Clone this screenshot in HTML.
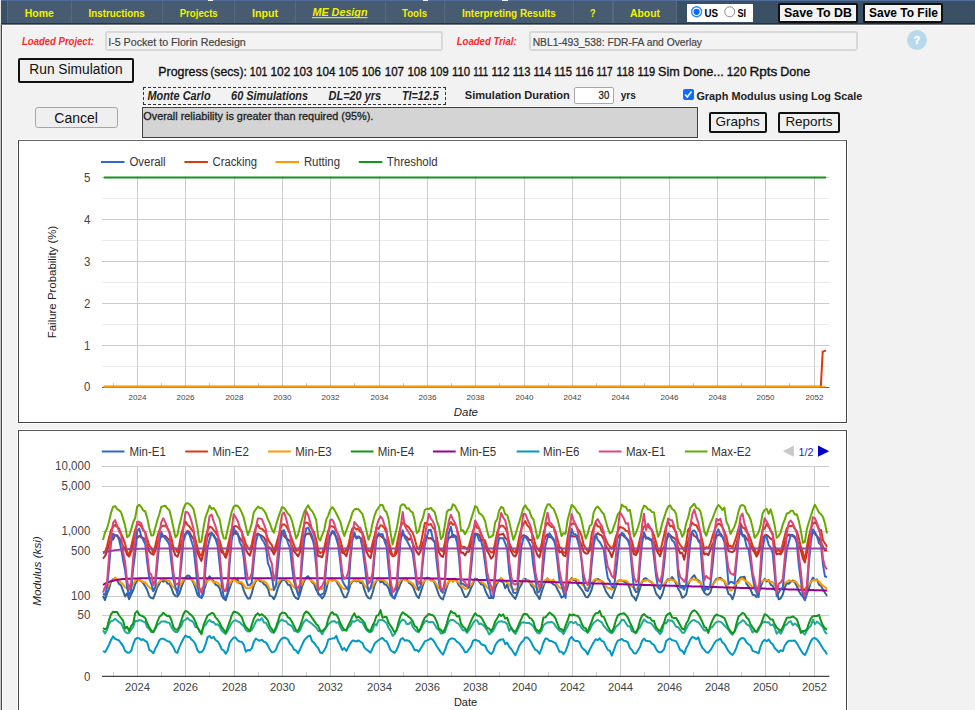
<!DOCTYPE html>
<html><head><meta charset="utf-8"><title>ME Design</title>
<style>
html,body{margin:0;padding:0;}
body{width:975px;height:710px;overflow:hidden;position:relative;background:#f2f2f2;font-family:"Liberation Sans",sans-serif;}
.a{position:absolute;box-sizing:border-box;}
#nav{left:0;top:0;width:975px;height:24px;background:#3a5064;}
.ni{top:1px;height:22px;background:#475c70;border-left:1px solid #55687d;border-right:1px solid #55687d;}
.btn{background:#f0f0f0;border:2px solid #111;border-radius:2px;}
svg{position:absolute;left:0;top:0;}
svg text{font-family:"Liberation Sans",sans-serif;}
</style></head><body>
<div class="a" style="left:0;top:0;width:1px;height:710px;background:#c8c8c8"></div>
<div class="a" style="left:1px;top:0;width:1px;height:710px;background:#444"></div>
<div class="a" style="left:2px;top:25px;width:1px;height:685px;background:#fff"></div>
<div class="a" id="nav"></div>
<div class="a" style="left:1px;top:0;width:974px;height:1px;background:#506c9b"></div>
<div class="a" style="left:208px;top:0;width:5px;height:1px;background:#f4f4f4"></div>
<div class="a" style="left:423px;top:0;width:5px;height:1px;background:#f4f4f4"></div>
<div class="a" style="left:502px;top:0;width:6px;height:1px;background:#f4f4f4"></div>
<div class="a" style="left:0;top:0;width:1px;height:24px;background:#e8e8e8"></div>
<div class="a ni" style="left:7px;width:64.5px"></div>
<div class="a ni" style="left:71px;width:91.5px"></div>
<div class="a ni" style="left:162px;width:72.5px"></div>
<div class="a ni" style="left:234px;width:61.5px"></div>
<div class="a ni" style="left:295px;width:90.5px"></div>
<div class="a ni" style="left:385px;width:59.5px"></div>
<div class="a ni" style="left:444px;width:129.5px"></div>
<div class="a ni" style="left:573px;width:40px"></div>
<div class="a ni" style="left:612.5px;width:64.5px"></div>
<div class="a" style="left:1px;top:23px;width:974px;height:1px;background:#27323e"></div>
<div class="a" style="left:1px;top:24px;width:974px;height:1px;background:#6f757c"></div>
<div class="a" style="left:2px;top:25px;width:973px;height:1px;background:#fff"></div>
<div class="a" style="left:687px;top:4px;width:66px;height:17.5px;background:#fff"></div>
<div class="a btn" style="left:778px;top:3px;width:80px;height:20px;background:#f2f2f2"></div>
<div class="a btn" style="left:863px;top:3px;width:80px;height:20px;background:#f2f2f2"></div>

<div class="a" style="left:105px;top:31px;width:337.5px;height:19.5px;border:2px solid #d8d8d8;border-radius:3px;background:#f3f3f3"></div>
<div class="a" style="left:529px;top:31px;width:329px;height:19.5px;border:2px solid #d8d8d8;border-radius:3px;background:#f3f3f3"></div>
<div class="a" style="left:907px;top:30px;width:20px;height:20px;border-radius:50%;background:#b8d9ec"></div>

<div class="a btn" style="left:18px;top:58px;width:116px;height:24.5px"></div>
<div class="a" style="left:142.5px;top:87px;width:303.5px;height:17.5px;border:1px dashed #333"></div>
<div class="a" style="left:141px;top:106px;width:558px;height:33px;border:1px solid #fafafa"></div>
<div class="a" style="left:142px;top:107px;width:556px;height:31px;background:#d4d4d4;border:1.2px solid #404040"></div>
<div class="a" style="left:574px;top:87px;width:39.5px;height:16.5px;background:#fff;border:1px solid #a8a8a8;border-radius:2px"></div>
<div class="a" style="left:683px;top:89px;width:10.5px;height:11px;background:#0b6cff;border-radius:2px"></div>
<div class="a" style="left:35px;top:107px;width:83px;height:21px;background:#efefef;border:1.5px solid #a6a6a6;border-radius:3px"></div>
<div class="a btn" style="left:708.5px;top:111.5px;width:58px;height:21.5px"></div>
<div class="a btn" style="left:778px;top:111.5px;width:61.5px;height:21.5px"></div>

<div class="a" style="left:17px;top:139px;width:831px;height:285px;background:#fff"></div>
<div class="a" style="left:18px;top:140px;width:829px;height:283px;background:#fff;border:1px solid #444;border-top-color:#666"></div>
<div class="a" style="left:17px;top:429px;width:831px;height:290px;background:#fff"></div>
<div class="a" style="left:18px;top:430px;width:829px;height:290px;background:#fff;border:1px solid #444;border-top-color:#555"></div>

<svg width="975" height="710" viewBox="0 0 975 710">
<circle cx="696.6" cy="11.8" r="5" fill="#fff" stroke="#2f86ff" stroke-width="1.4"/>
<circle cx="696.6" cy="11.8" r="3.1" fill="#0b6bff"/>
<circle cx="729.7" cy="11.8" r="5" fill="#fff" stroke="#888" stroke-width="1"/>
<polyline points="685,94.5 687.3,97 691.5,91.5" fill="none" stroke="#fff" stroke-width="1.6"/>
<line x1="102.0" y1="366.5" x2="829.3" y2="366.5" stroke="#ebebeb" stroke-width="1"/><line x1="102.0" y1="324.5" x2="829.3" y2="324.5" stroke="#ebebeb" stroke-width="1"/><line x1="102.0" y1="282.5" x2="829.3" y2="282.5" stroke="#ebebeb" stroke-width="1"/><line x1="102.0" y1="240.5" x2="829.3" y2="240.5" stroke="#ebebeb" stroke-width="1"/><line x1="102.0" y1="198.5" x2="829.3" y2="198.5" stroke="#ebebeb" stroke-width="1"/><line x1="102.0" y1="345.5" x2="829.3" y2="345.5" stroke="#cccccc" stroke-width="1"/><line x1="102.0" y1="303.5" x2="829.3" y2="303.5" stroke="#cccccc" stroke-width="1"/><line x1="102.0" y1="261.5" x2="829.3" y2="261.5" stroke="#cccccc" stroke-width="1"/><line x1="102.0" y1="219.5" x2="829.3" y2="219.5" stroke="#cccccc" stroke-width="1"/><line x1="102.0" y1="177.5" x2="829.3" y2="177.5" stroke="#cccccc" stroke-width="1"/><line x1="137.5" y1="176" x2="137.5" y2="387" stroke="#cccccc" stroke-width="1"/><line x1="185.5" y1="176" x2="185.5" y2="387" stroke="#cccccc" stroke-width="1"/><line x1="234.5" y1="176" x2="234.5" y2="387" stroke="#cccccc" stroke-width="1"/><line x1="282.5" y1="176" x2="282.5" y2="387" stroke="#cccccc" stroke-width="1"/><line x1="330.5" y1="176" x2="330.5" y2="387" stroke="#cccccc" stroke-width="1"/><line x1="379.5" y1="176" x2="379.5" y2="387" stroke="#cccccc" stroke-width="1"/><line x1="427.5" y1="176" x2="427.5" y2="387" stroke="#cccccc" stroke-width="1"/><line x1="475.5" y1="176" x2="475.5" y2="387" stroke="#cccccc" stroke-width="1"/><line x1="524.5" y1="176" x2="524.5" y2="387" stroke="#cccccc" stroke-width="1"/><line x1="572.5" y1="176" x2="572.5" y2="387" stroke="#cccccc" stroke-width="1"/><line x1="620.5" y1="176" x2="620.5" y2="387" stroke="#cccccc" stroke-width="1"/><line x1="669.5" y1="176" x2="669.5" y2="387" stroke="#cccccc" stroke-width="1"/><line x1="717.5" y1="176" x2="717.5" y2="387" stroke="#cccccc" stroke-width="1"/><line x1="765.5" y1="176" x2="765.5" y2="387" stroke="#cccccc" stroke-width="1"/><line x1="814.5" y1="176" x2="814.5" y2="387" stroke="#cccccc" stroke-width="1"/><line x1="113.5" y1="383" x2="113.5" y2="387" stroke="#cccccc" stroke-width="1"/><line x1="161.5" y1="383" x2="161.5" y2="387" stroke="#cccccc" stroke-width="1"/><line x1="209.5" y1="383" x2="209.5" y2="387" stroke="#cccccc" stroke-width="1"/><line x1="258.5" y1="383" x2="258.5" y2="387" stroke="#cccccc" stroke-width="1"/><line x1="306.5" y1="383" x2="306.5" y2="387" stroke="#cccccc" stroke-width="1"/><line x1="354.5" y1="383" x2="354.5" y2="387" stroke="#cccccc" stroke-width="1"/><line x1="403.5" y1="383" x2="403.5" y2="387" stroke="#cccccc" stroke-width="1"/><line x1="451.5" y1="383" x2="451.5" y2="387" stroke="#cccccc" stroke-width="1"/><line x1="499.5" y1="383" x2="499.5" y2="387" stroke="#cccccc" stroke-width="1"/><line x1="548.5" y1="383" x2="548.5" y2="387" stroke="#cccccc" stroke-width="1"/><line x1="596.5" y1="383" x2="596.5" y2="387" stroke="#cccccc" stroke-width="1"/><line x1="644.5" y1="383" x2="644.5" y2="387" stroke="#cccccc" stroke-width="1"/><line x1="693.5" y1="383" x2="693.5" y2="387" stroke="#cccccc" stroke-width="1"/><line x1="741.5" y1="383" x2="741.5" y2="387" stroke="#cccccc" stroke-width="1"/><line x1="789.5" y1="383" x2="789.5" y2="387" stroke="#cccccc" stroke-width="1"/><line x1="102.0" y1="387.5" x2="829.3" y2="387.5" stroke="#555" stroke-width="1"/><line x1="103.8" y1="177.5" x2="826" y2="177.5" stroke="#109618" stroke-width="2"/><polyline points="103.8,386.7 820.8,386.7 822.7,351.8 826,350.4" fill="none" stroke="#dc3912" stroke-width="2"/><line x1="103.8" y1="386.7" x2="820" y2="386.7" stroke="#ff9900" stroke-width="2"/><line x1="820" y1="386.7" x2="826" y2="386.7" stroke="#ff9900" stroke-width="2" opacity="0.7"/><line x1="101" y1="162" x2="124.5" y2="162" stroke="#3366cc" stroke-width="2"/><line x1="184.4" y1="162" x2="207.9" y2="162" stroke="#dc3912" stroke-width="2"/><line x1="275.5" y1="162" x2="299.0" y2="162" stroke="#ff9900" stroke-width="2"/><line x1="358.8" y1="162" x2="382.3" y2="162" stroke="#109618" stroke-width="2"/><line x1="102.0" y1="466.5" x2="829.3" y2="466.5" stroke="#cccccc" stroke-width="1"/><line x1="102.0" y1="486.5" x2="829.3" y2="486.5" stroke="#cccccc" stroke-width="1"/><line x1="102.0" y1="531.5" x2="829.3" y2="531.5" stroke="#cccccc" stroke-width="1"/><line x1="102.0" y1="551.5" x2="829.3" y2="551.5" stroke="#cccccc" stroke-width="1"/><line x1="102.0" y1="596.5" x2="829.3" y2="596.5" stroke="#cccccc" stroke-width="1"/><line x1="102.0" y1="615.5" x2="829.3" y2="615.5" stroke="#cccccc" stroke-width="1"/><line x1="137.5" y1="466" x2="137.5" y2="676" stroke="#cccccc" stroke-width="1"/><line x1="185.5" y1="466" x2="185.5" y2="676" stroke="#cccccc" stroke-width="1"/><line x1="234.5" y1="466" x2="234.5" y2="676" stroke="#cccccc" stroke-width="1"/><line x1="282.5" y1="466" x2="282.5" y2="676" stroke="#cccccc" stroke-width="1"/><line x1="330.5" y1="466" x2="330.5" y2="676" stroke="#cccccc" stroke-width="1"/><line x1="379.5" y1="466" x2="379.5" y2="676" stroke="#cccccc" stroke-width="1"/><line x1="427.5" y1="466" x2="427.5" y2="676" stroke="#cccccc" stroke-width="1"/><line x1="475.5" y1="466" x2="475.5" y2="676" stroke="#cccccc" stroke-width="1"/><line x1="524.5" y1="466" x2="524.5" y2="676" stroke="#cccccc" stroke-width="1"/><line x1="572.5" y1="466" x2="572.5" y2="676" stroke="#cccccc" stroke-width="1"/><line x1="620.5" y1="466" x2="620.5" y2="676" stroke="#cccccc" stroke-width="1"/><line x1="669.5" y1="466" x2="669.5" y2="676" stroke="#cccccc" stroke-width="1"/><line x1="717.5" y1="466" x2="717.5" y2="676" stroke="#cccccc" stroke-width="1"/><line x1="765.5" y1="466" x2="765.5" y2="676" stroke="#cccccc" stroke-width="1"/><line x1="814.5" y1="466" x2="814.5" y2="676" stroke="#cccccc" stroke-width="1"/><line x1="113.5" y1="672" x2="113.5" y2="676" stroke="#cccccc" stroke-width="1"/><line x1="161.5" y1="672" x2="161.5" y2="676" stroke="#cccccc" stroke-width="1"/><line x1="209.5" y1="672" x2="209.5" y2="676" stroke="#cccccc" stroke-width="1"/><line x1="258.5" y1="672" x2="258.5" y2="676" stroke="#cccccc" stroke-width="1"/><line x1="306.5" y1="672" x2="306.5" y2="676" stroke="#cccccc" stroke-width="1"/><line x1="354.5" y1="672" x2="354.5" y2="676" stroke="#cccccc" stroke-width="1"/><line x1="403.5" y1="672" x2="403.5" y2="676" stroke="#cccccc" stroke-width="1"/><line x1="451.5" y1="672" x2="451.5" y2="676" stroke="#cccccc" stroke-width="1"/><line x1="499.5" y1="672" x2="499.5" y2="676" stroke="#cccccc" stroke-width="1"/><line x1="548.5" y1="672" x2="548.5" y2="676" stroke="#cccccc" stroke-width="1"/><line x1="596.5" y1="672" x2="596.5" y2="676" stroke="#cccccc" stroke-width="1"/><line x1="644.5" y1="672" x2="644.5" y2="676" stroke="#cccccc" stroke-width="1"/><line x1="693.5" y1="672" x2="693.5" y2="676" stroke="#cccccc" stroke-width="1"/><line x1="741.5" y1="672" x2="741.5" y2="676" stroke="#cccccc" stroke-width="1"/><line x1="789.5" y1="672" x2="789.5" y2="676" stroke="#cccccc" stroke-width="1"/><line x1="102.0" y1="676.3" x2="829.3" y2="676.3" stroke="#444" stroke-width="1.3"/><line x1="101.8" y1="451.5" x2="124.5" y2="451.5" stroke="#3366cc" stroke-width="2"/><line x1="185.20000000000002" y1="451.5" x2="207.9" y2="451.5" stroke="#dc3912" stroke-width="2"/><line x1="268.1" y1="451.5" x2="290.8" y2="451.5" stroke="#ff9900" stroke-width="2"/><line x1="350.8" y1="451.5" x2="373.5" y2="451.5" stroke="#109618" stroke-width="2"/><line x1="433.0" y1="451.5" x2="455.7" y2="451.5" stroke="#990099" stroke-width="2"/><line x1="516.6999999999999" y1="451.5" x2="539.4" y2="451.5" stroke="#0099c6" stroke-width="2"/><line x1="598.8" y1="451.5" x2="621.5" y2="451.5" stroke="#dd4477" stroke-width="2"/><line x1="684.8" y1="451.5" x2="707.5" y2="451.5" stroke="#66aa00" stroke-width="2"/><polygon points="782.8,451.2 793.8,445.5 793.8,456.8" fill="#c8c8c8"/><polygon points="829.2,451.2 818,445.5 818,456.8" fill="#0000cc"/>
<g clip-path="url(#cp)"><path d="M103.0,651.0 L105.0,652.2 L107.0,648.7 L109.0,644.7 L111.0,640.0 L113.1,636.4 L115.1,638.8 L117.1,639.6 L119.1,640.5 L121.1,643.3 L123.1,646.1 L125.1,650.9 L127.1,652.4 L129.1,652.8 L131.2,650.9 L133.2,644.2 L135.2,639.4 L137.2,637.9 L139.2,638.4 L141.2,640.0 L143.2,639.2 L145.2,640.9 L147.2,642.2 L149.3,649.9 L151.3,651.1 L153.3,653.3 L155.3,648.6 L157.3,645.1 L159.3,640.3 L161.3,638.8 L163.3,638.7 L165.3,639.8 L167.4,641.3 L169.4,641.6 L171.4,644.0 L173.4,647.1 L175.4,651.9 L177.4,652.9 L179.4,647.1 L181.4,642.7 L183.4,638.7 L185.5,635.6 L187.5,636.8 L189.5,636.9 L191.5,639.6 L193.5,641.3 L195.5,644.4 L197.5,650.4 L199.5,652.5 L201.5,652.1 L203.6,649.6 L205.6,644.1 L207.6,637.2 L209.6,636.0 L211.6,638.2 L213.6,636.8 L215.6,640.0 L217.6,641.3 L219.6,644.5 L221.7,649.4 L223.7,650.4 L225.7,653.8 L227.7,650.5 L229.7,642.7 L231.7,639.8 L233.7,637.6 L235.7,637.5 L237.7,640.3 L239.8,641.7 L241.8,641.8 L243.8,644.8 L245.8,651.8 L247.8,649.9 L249.8,650.5 L251.8,648.4 L253.8,641.9 L255.8,638.5 L257.9,640.0 L259.9,640.7 L261.9,639.7 L263.9,641.7 L265.9,642.4 L267.9,645.6 L269.9,649.6 L271.9,652.3 L273.9,651.9 L276.0,649.6 L278.0,644.2 L280.0,640.7 L282.0,638.5 L284.0,637.6 L286.0,638.0 L288.0,639.5 L290.0,643.7 L292.0,645.6 L294.1,649.7 L296.1,650.7 L298.1,653.4 L300.1,649.3 L302.1,644.8 L304.1,640.5 L306.1,638.2 L308.1,636.3 L310.1,635.6 L312.2,641.3 L314.2,642.9 L316.2,645.8 L318.2,648.0 L320.2,652.6 L322.2,653.3 L324.2,650.2 L326.2,646.7 L328.2,639.7 L330.3,639.0 L332.3,638.4 L334.3,638.3 L336.3,635.8 L338.3,641.6 L340.3,645.0 L342.3,649.9 L344.3,648.0 L346.3,651.0 L348.4,646.9 L350.4,643.3 L352.4,640.5 L354.4,640.8 L356.4,641.6 L358.4,640.4 L360.4,641.8 L362.4,642.8 L364.4,647.6 L366.5,649.6 L368.5,650.9 L370.5,652.7 L372.5,648.3 L374.5,643.9 L376.5,641.7 L378.5,640.2 L380.5,638.7 L382.5,638.0 L384.6,640.4 L386.6,641.3 L388.6,645.5 L390.6,650.2 L392.6,651.7 L394.6,652.9 L396.6,650.0 L398.6,645.2 L400.6,639.4 L402.7,638.0 L404.7,640.6 L406.7,640.2 L408.7,640.7 L410.7,642.7 L412.7,646.0 L414.7,650.3 L416.7,650.0 L418.7,651.6 L420.8,648.2 L422.8,644.9 L424.8,641.4 L426.8,640.6 L428.8,639.6 L430.8,638.3 L432.8,639.9 L434.8,642.6 L436.8,646.2 L438.9,649.4 L440.9,652.4 L442.9,654.7 L444.9,650.4 L446.9,644.4 L448.9,640.0 L450.9,638.6 L452.9,638.4 L454.9,639.4 L457.0,641.8 L459.0,643.0 L461.0,645.6 L463.0,648.3 L465.0,652.2 L467.0,652.0 L469.0,649.1 L471.0,646.5 L473.0,640.8 L475.1,639.7 L477.1,640.5 L479.1,641.1 L481.1,644.0 L483.1,645.1 L485.1,645.5 L487.1,650.2 L489.1,652.4 L491.1,654.1 L493.2,651.6 L495.2,645.3 L497.2,642.2 L499.2,640.3 L501.2,639.5 L503.2,639.2 L505.2,644.1 L507.2,642.6 L509.2,646.8 L511.3,649.0 L513.3,652.2 L515.3,655.3 L517.3,650.8 L519.3,645.7 L521.3,642.5 L523.3,640.6 L525.3,637.4 L527.3,637.6 L529.4,639.5 L531.4,642.8 L533.4,646.7 L535.4,649.9 L537.4,650.7 L539.4,653.8 L541.4,649.1 L543.4,642.8 L545.4,638.6 L547.5,638.8 L549.5,641.0 L551.5,641.0 L553.5,642.2 L555.5,643.0 L557.5,647.1 L559.5,651.8 L561.5,651.7 L563.5,654.2 L565.6,651.2 L567.6,645.9 L569.6,639.1 L571.6,636.9 L573.6,639.7 L575.6,641.1 L577.6,641.0 L579.6,642.4 L581.6,647.1 L583.7,649.4 L585.7,650.9 L587.7,654.4 L589.7,649.7 L591.7,645.9 L593.7,642.2 L595.7,639.2 L597.7,640.2 L599.7,638.3 L601.8,641.0 L603.8,641.6 L605.8,646.1 L607.8,649.9 L609.8,650.7 L611.8,655.6 L613.8,650.3 L615.8,644.6 L617.8,640.7 L619.9,639.8 L621.9,639.0 L623.9,640.8 L625.9,641.1 L627.9,642.3 L629.9,647.8 L631.9,650.0 L633.9,653.2 L635.9,653.5 L638.0,650.2 L640.0,646.9 L642.0,641.2 L644.0,638.5 L646.0,640.8 L648.0,641.1 L650.0,641.3 L652.0,643.8 L654.0,644.8 L656.1,649.0 L658.1,651.8 L660.1,652.4 L662.1,651.5 L664.1,649.2 L666.1,641.1 L668.1,639.4 L670.1,638.4 L672.1,640.3 L674.2,640.6 L676.2,641.4 L678.2,645.3 L680.2,650.2 L682.2,650.8 L684.2,653.9 L686.2,647.9 L688.2,644.5 L690.2,639.6 L692.3,637.0 L694.3,637.6 L696.3,639.2 L698.3,637.2 L700.3,643.6 L702.3,647.7 L704.3,649.9 L706.3,652.3 L708.3,652.7 L710.4,650.2 L712.4,646.9 L714.4,643.1 L716.4,640.5 L718.4,639.9 L720.4,638.6 L722.4,642.4 L724.4,644.0 L726.4,647.5 L728.5,651.2 L730.5,653.5 L732.5,655.0 L734.5,652.0 L736.5,647.4 L738.5,641.3 L740.5,638.7 L742.5,638.0 L744.5,638.9 L746.6,642.4 L748.6,644.3 L750.6,645.8 L752.6,650.8 L754.6,651.6 L756.6,652.3 L758.6,653.3 L760.6,646.3 L762.6,641.7 L764.7,639.7 L766.7,641.2 L768.7,639.5 L770.7,642.4 L772.7,644.2 L774.7,648.0 L776.7,650.1 L778.7,652.2 L780.7,650.3 L782.8,651.2 L784.8,645.5 L786.8,642.5 L788.8,640.7 L790.8,640.8 L792.8,640.8 L794.8,640.6 L796.8,643.1 L798.8,646.7 L800.9,650.3 L802.9,653.6 L804.9,654.9 L806.9,651.2 L808.9,645.9 L810.9,641.2 L812.9,638.4 L814.9,638.1 L816.9,639.4 L819.0,642.0 L821.0,645.3 L823.0,648.6 L825.0,651.1 L827.0,654.5" fill="none" stroke="#0099c6" stroke-width="2" stroke-linejoin="round"/><path d="M103.0,630.2 L105.0,633.5 L107.0,630.1 L109.0,624.0 L111.0,621.2 L113.1,620.6 L115.1,618.8 L117.1,620.6 L119.1,622.3 L121.1,623.3 L123.1,627.7 L125.1,631.7 L127.1,633.3 L129.1,633.1 L131.2,629.6 L133.2,627.0 L135.2,620.8 L137.2,621.3 L139.2,620.0 L141.2,620.5 L143.2,621.6 L145.2,622.3 L147.2,627.2 L149.3,629.0 L151.3,632.1 L153.3,632.3 L155.3,628.9 L157.3,625.1 L159.3,623.4 L161.3,621.6 L163.3,621.5 L165.3,621.3 L167.4,622.6 L169.4,622.7 L171.4,627.2 L173.4,630.2 L175.4,631.9 L177.4,632.1 L179.4,628.5 L181.4,625.9 L183.4,620.6 L185.5,619.9 L187.5,617.8 L189.5,620.2 L191.5,620.7 L193.5,622.6 L195.5,627.1 L197.5,626.9 L199.5,631.9 L201.5,632.6 L203.6,626.6 L205.6,624.8 L207.6,621.7 L209.6,620.0 L211.6,622.0 L213.6,622.1 L215.6,624.7 L217.6,624.2 L219.6,626.3 L221.7,630.5 L223.7,632.4 L225.7,634.0 L227.7,630.7 L229.7,626.9 L231.7,622.9 L233.7,620.9 L235.7,620.3 L237.7,621.5 L239.8,622.2 L241.8,624.5 L243.8,626.1 L245.8,629.8 L247.8,631.6 L249.8,631.2 L251.8,629.6 L253.8,626.4 L255.8,621.7 L257.9,619.5 L259.9,620.4 L261.9,618.1 L263.9,622.5 L265.9,622.8 L267.9,626.6 L269.9,630.3 L271.9,632.2 L273.9,632.8 L276.0,629.3 L278.0,624.1 L280.0,620.8 L282.0,619.6 L284.0,620.9 L286.0,621.2 L288.0,624.0 L290.0,625.0 L292.0,626.1 L294.1,630.9 L296.1,631.4 L298.1,632.4 L300.1,630.4 L302.1,625.2 L304.1,621.7 L306.1,619.5 L308.1,621.0 L310.1,622.4 L312.2,624.0 L314.2,625.8 L316.2,627.5 L318.2,630.7 L320.2,631.5 L322.2,634.3 L324.2,630.4 L326.2,627.1 L328.2,624.6 L330.3,622.4 L332.3,621.4 L334.3,621.0 L336.3,622.8 L338.3,622.1 L340.3,627.0 L342.3,630.6 L344.3,630.1 L346.3,630.8 L348.4,626.8 L350.4,625.7 L352.4,621.1 L354.4,621.8 L356.4,620.2 L358.4,620.1 L360.4,622.0 L362.4,622.6 L364.4,626.4 L366.5,630.0 L368.5,631.7 L370.5,632.3 L372.5,630.4 L374.5,624.2 L376.5,625.4 L378.5,620.2 L380.5,620.0 L382.5,619.9 L384.6,621.4 L386.6,623.1 L388.6,628.0 L390.6,630.9 L392.6,635.9 L394.6,634.1 L396.6,629.8 L398.6,625.6 L400.6,621.4 L402.7,619.6 L404.7,620.6 L406.7,624.1 L408.7,624.1 L410.7,621.6 L412.7,626.8 L414.7,629.3 L416.7,631.5 L418.7,631.8 L420.8,629.1 L422.8,624.8 L424.8,621.6 L426.8,620.7 L428.8,622.2 L430.8,622.0 L432.8,621.9 L434.8,624.8 L436.8,628.2 L438.9,630.1 L440.9,633.6 L442.9,633.2 L444.9,632.2 L446.9,626.0 L448.9,621.6 L450.9,619.7 L452.9,619.9 L454.9,621.2 L457.0,623.0 L459.0,624.2 L461.0,627.6 L463.0,630.5 L465.0,630.1 L467.0,633.0 L469.0,630.2 L471.0,626.7 L473.0,623.4 L475.1,620.2 L477.1,620.3 L479.1,623.9 L481.1,623.6 L483.1,625.2 L485.1,627.4 L487.1,630.1 L489.1,634.4 L491.1,632.6 L493.2,630.9 L495.2,626.5 L497.2,623.0 L499.2,621.4 L501.2,621.3 L503.2,621.8 L505.2,622.2 L507.2,624.2 L509.2,630.9 L511.3,627.5 L513.3,631.5 L515.3,633.9 L517.3,630.4 L519.3,626.4 L521.3,622.8 L523.3,622.2 L525.3,622.8 L527.3,622.9 L529.4,623.1 L531.4,624.4 L533.4,626.6 L535.4,630.1 L537.4,632.9 L539.4,633.5 L541.4,630.8 L543.4,625.4 L545.4,623.7 L547.5,622.2 L549.5,622.5 L551.5,621.8 L553.5,623.0 L555.5,625.9 L557.5,628.8 L559.5,630.8 L561.5,631.6 L563.5,634.1 L565.6,629.9 L567.6,626.3 L569.6,622.1 L571.6,622.1 L573.6,623.3 L575.6,621.8 L577.6,624.7 L579.6,624.8 L581.6,628.1 L583.7,630.1 L585.7,631.0 L587.7,632.4 L589.7,629.8 L591.7,625.6 L593.7,622.7 L595.7,621.3 L597.7,619.8 L599.7,621.2 L601.8,622.4 L603.8,626.0 L605.8,628.2 L607.8,630.5 L609.8,632.1 L611.8,633.3 L613.8,630.8 L615.8,626.8 L617.8,625.4 L619.9,623.0 L621.9,619.8 L623.9,620.0 L625.9,623.2 L627.9,626.3 L629.9,626.3 L631.9,631.3 L633.9,631.9 L635.9,633.4 L638.0,629.7 L640.0,627.4 L642.0,623.3 L644.0,619.5 L646.0,621.3 L648.0,622.6 L650.0,622.8 L652.0,624.2 L654.0,627.0 L656.1,629.9 L658.1,631.6 L660.1,634.2 L662.1,631.5 L664.1,622.4 L666.1,623.5 L668.1,620.0 L670.1,620.8 L672.1,620.6 L674.2,623.4 L676.2,626.8 L678.2,627.2 L680.2,629.8 L682.2,632.7 L684.2,632.7 L686.2,629.1 L688.2,624.8 L690.2,622.3 L692.3,620.5 L694.3,620.0 L696.3,621.5 L698.3,622.1 L700.3,624.7 L702.3,627.7 L704.3,630.5 L706.3,630.2 L708.3,631.1 L710.4,627.7 L712.4,627.0 L714.4,624.1 L716.4,622.1 L718.4,621.4 L720.4,621.8 L722.4,623.3 L724.4,625.5 L726.4,627.5 L728.5,629.9 L730.5,632.9 L732.5,634.8 L734.5,631.3 L736.5,627.4 L738.5,623.4 L740.5,622.3 L742.5,620.1 L744.5,621.3 L746.6,624.4 L748.6,625.2 L750.6,628.0 L752.6,632.5 L754.6,630.6 L756.6,632.3 L758.6,630.0 L760.6,624.7 L762.6,622.5 L764.7,621.7 L766.7,622.4 L768.7,622.2 L770.7,625.3 L772.7,624.4 L774.7,627.6 L776.7,633.7 L778.7,631.3 L780.7,633.7 L782.8,629.7 L784.8,625.4 L786.8,624.5 L788.8,622.0 L790.8,621.3 L792.8,625.2 L794.8,623.5 L796.8,625.0 L798.8,627.3 L800.9,630.6 L802.9,632.5 L804.9,634.6 L806.9,630.5 L808.9,627.6 L810.9,625.7 L812.9,619.9 L814.9,624.0 L816.9,621.6 L819.0,623.3 L821.0,625.0 L823.0,627.5 L825.0,632.0 L827.0,634.1" fill="none" stroke="#22aa99" stroke-width="2" stroke-linejoin="round"/><path d="M103.0,628.0 L105.0,629.3 L107.0,627.9 L109.0,620.1 L111.0,614.4 L113.1,611.7 L115.1,612.0 L117.1,612.0 L119.1,615.5 L121.1,618.0 L123.1,620.7 L125.1,628.6 L127.1,626.7 L129.1,631.0 L131.2,625.8 L133.2,623.5 L135.2,613.1 L137.2,611.1 L139.2,614.8 L141.2,615.6 L143.2,616.6 L145.2,617.8 L147.2,623.3 L149.3,627.4 L151.3,630.5 L153.3,632.1 L155.3,628.0 L157.3,622.0 L159.3,617.0 L161.3,615.3 L163.3,612.7 L165.3,614.6 L167.4,616.1 L169.4,615.8 L171.4,620.2 L173.4,626.8 L175.4,629.5 L177.4,629.8 L179.4,626.4 L181.4,620.2 L183.4,614.1 L185.5,610.9 L187.5,611.6 L189.5,613.8 L191.5,615.3 L193.5,617.7 L195.5,621.9 L197.5,627.9 L199.5,630.4 L201.5,634.3 L203.6,624.8 L205.6,620.2 L207.6,615.5 L209.6,614.3 L211.6,613.0 L213.6,613.5 L215.6,617.4 L217.6,619.5 L219.6,622.6 L221.7,627.1 L223.7,629.6 L225.7,633.0 L227.7,627.0 L229.7,621.7 L231.7,615.6 L233.7,611.8 L235.7,612.1 L237.7,612.9 L239.8,614.8 L241.8,617.1 L243.8,623.2 L245.8,627.0 L247.8,628.9 L249.8,631.2 L251.8,624.9 L253.8,618.7 L255.8,615.1 L257.9,613.3 L259.9,615.5 L261.9,614.2 L263.9,615.9 L265.9,617.8 L267.9,620.5 L269.9,626.5 L271.9,629.1 L273.9,632.1 L276.0,626.8 L278.0,621.1 L280.0,614.6 L282.0,612.8 L284.0,612.7 L286.0,613.8 L288.0,617.4 L290.0,618.5 L292.0,622.0 L294.1,626.1 L296.1,630.4 L298.1,630.6 L300.1,626.1 L302.1,620.2 L304.1,613.8 L306.1,611.5 L308.1,612.5 L310.1,614.9 L312.2,618.2 L314.2,620.9 L316.2,624.0 L318.2,625.8 L320.2,630.3 L322.2,631.3 L324.2,629.3 L326.2,626.9 L328.2,619.2 L330.3,614.0 L332.3,612.1 L334.3,614.5 L336.3,614.5 L338.3,617.9 L340.3,623.0 L342.3,626.7 L344.3,629.9 L346.3,630.0 L348.4,625.2 L350.4,621.1 L352.4,616.5 L354.4,613.3 L356.4,617.8 L358.4,616.5 L360.4,618.3 L362.4,620.2 L364.4,622.6 L366.5,628.2 L368.5,630.3 L370.5,631.1 L372.5,625.5 L374.5,621.9 L376.5,615.7 L378.5,615.2 L380.5,610.1 L382.5,617.8 L384.6,616.9 L386.6,617.0 L388.6,622.8 L390.6,625.7 L392.6,628.9 L394.6,632.4 L396.6,630.4 L398.6,621.7 L400.6,615.5 L402.7,612.2 L404.7,613.8 L406.7,615.1 L408.7,616.9 L410.7,618.3 L412.7,621.2 L414.7,626.2 L416.7,627.1 L418.7,631.8 L420.8,627.6 L422.8,622.0 L424.8,617.7 L426.8,616.0 L428.8,613.9 L430.8,614.7 L432.8,615.2 L434.8,617.4 L436.8,621.8 L438.9,628.5 L440.9,629.9 L442.9,632.5 L444.9,628.7 L446.9,623.3 L448.9,615.6 L450.9,611.1 L452.9,612.7 L454.9,613.2 L457.0,616.5 L459.0,615.6 L461.0,623.6 L463.0,626.6 L465.0,628.2 L467.0,631.1 L469.0,626.1 L471.0,621.0 L473.0,616.9 L475.1,613.2 L477.1,615.4 L479.1,615.8 L481.1,617.3 L483.1,620.6 L485.1,624.6 L487.1,627.8 L489.1,628.6 L491.1,631.2 L493.2,627.4 L495.2,621.6 L497.2,618.3 L499.2,614.4 L501.2,616.0 L503.2,614.4 L505.2,618.6 L507.2,617.6 L509.2,623.7 L511.3,628.4 L513.3,630.7 L515.3,631.8 L517.3,628.3 L519.3,623.1 L521.3,618.9 L523.3,614.3 L525.3,614.0 L527.3,614.5 L529.4,617.8 L531.4,618.7 L533.4,621.8 L535.4,628.5 L537.4,630.4 L539.4,631.5 L541.4,627.8 L543.4,617.5 L545.4,617.3 L547.5,614.8 L549.5,612.6 L551.5,614.0 L553.5,615.6 L555.5,618.4 L557.5,623.8 L559.5,628.6 L561.5,629.3 L563.5,631.4 L565.6,625.5 L567.6,620.7 L569.6,614.3 L571.6,615.5 L573.6,614.5 L575.6,615.6 L577.6,615.7 L579.6,618.1 L581.6,623.5 L583.7,627.5 L585.7,628.1 L587.7,632.6 L589.7,626.3 L591.7,621.4 L593.7,615.8 L595.7,613.3 L597.7,613.3 L599.7,610.8 L601.8,616.4 L603.8,616.9 L605.8,621.7 L607.8,626.1 L609.8,630.0 L611.8,632.1 L613.8,627.6 L615.8,620.7 L617.8,615.6 L619.9,614.1 L621.9,613.7 L623.9,613.3 L625.9,615.1 L627.9,617.6 L629.9,622.5 L631.9,626.4 L633.9,631.5 L635.9,632.6 L638.0,628.3 L640.0,620.5 L642.0,615.6 L644.0,614.1 L646.0,616.0 L648.0,617.4 L650.0,617.7 L652.0,620.7 L654.0,621.1 L656.1,627.4 L658.1,629.7 L660.1,631.3 L662.1,626.6 L664.1,622.8 L666.1,615.8 L668.1,614.1 L670.1,613.0 L672.1,617.6 L674.2,618.0 L676.2,618.0 L678.2,621.5 L680.2,625.3 L682.2,628.8 L684.2,629.5 L686.2,623.5 L688.2,620.5 L690.2,614.7 L692.3,611.3 L694.3,610.2 L696.3,611.7 L698.3,614.3 L700.3,617.8 L702.3,621.8 L704.3,626.9 L706.3,628.0 L708.3,633.0 L710.4,625.4 L712.4,620.5 L714.4,616.5 L716.4,614.5 L718.4,615.4 L720.4,615.9 L722.4,616.8 L724.4,618.1 L726.4,622.8 L728.5,628.2 L730.5,631.2 L732.5,633.3 L734.5,632.0 L736.5,623.5 L738.5,616.6 L740.5,614.9 L742.5,612.9 L744.5,613.9 L746.6,617.4 L748.6,619.3 L750.6,624.5 L752.6,627.4 L754.6,630.2 L756.6,631.9 L758.6,627.9 L760.6,625.6 L762.6,619.6 L764.7,614.2 L766.7,615.1 L768.7,617.1 L770.7,619.6 L772.7,619.6 L774.7,624.2 L776.7,627.6 L778.7,629.4 L780.7,630.7 L782.8,627.2 L784.8,622.5 L786.8,617.8 L788.8,617.5 L790.8,617.4 L792.8,616.4 L794.8,617.8 L796.8,619.2 L798.8,625.1 L800.9,632.9 L802.9,630.9 L804.9,630.9 L806.9,629.3 L808.9,623.3 L810.9,618.4 L812.9,616.2 L814.9,616.1 L816.9,616.1 L819.0,614.8 L821.0,621.2 L823.0,625.7 L825.0,628.4 L827.0,629.7" fill="none" stroke="#109618" stroke-width="2" stroke-linejoin="round"/><path d="M103.0,595.9 L105.0,600.0 L107.0,593.6 L109.0,588.8 L111.0,581.7 L113.1,579.2 L115.1,579.8 L117.1,580.1 L119.1,584.0 L121.1,585.3 L123.1,590.9 L125.1,596.5 L127.1,593.4 L129.1,599.2 L131.2,594.3 L133.2,590.2 L135.2,584.1 L137.2,580.6 L139.2,579.6 L141.2,580.8 L143.2,583.1 L145.2,586.3 L147.2,590.0 L149.3,596.2 L151.3,598.1 L153.3,598.4 L155.3,593.2 L157.3,587.3 L159.3,583.9 L161.3,579.6 L163.3,581.8 L165.3,579.7 L167.4,583.5 L169.4,584.0 L171.4,588.0 L173.4,593.7 L175.4,596.0 L177.4,596.5 L179.4,593.4 L181.4,587.1 L183.4,582.0 L185.5,577.6 L187.5,575.5 L189.5,576.0 L191.5,579.4 L193.5,582.8 L195.5,588.3 L197.5,594.7 L199.5,596.8 L201.5,597.4 L203.6,590.9 L205.6,585.6 L207.6,579.0 L209.6,576.3 L211.6,579.2 L213.6,581.1 L215.6,584.8 L217.6,585.6 L219.6,588.1 L221.7,595.7 L223.7,598.6 L225.7,600.3 L227.7,594.0 L229.7,588.1 L231.7,582.2 L233.7,578.3 L235.7,578.8 L237.7,579.9 L239.8,583.4 L241.8,584.0 L243.8,590.7 L245.8,595.0 L247.8,598.4 L249.8,598.6 L251.8,593.1 L253.8,585.5 L255.8,581.1 L257.9,578.9 L259.9,581.0 L261.9,581.7 L263.9,584.1 L265.9,585.5 L267.9,588.6 L269.9,595.9 L271.9,596.4 L273.9,599.1 L276.0,594.5 L278.0,587.6 L280.0,583.2 L282.0,580.0 L284.0,579.8 L286.0,581.2 L288.0,584.7 L290.0,585.1 L292.0,590.5 L294.1,595.8 L296.1,598.1 L298.1,599.1 L300.1,593.8 L302.1,586.5 L304.1,581.2 L306.1,577.5 L308.1,576.2 L310.1,579.1 L312.2,582.4 L314.2,584.4 L316.2,589.8 L318.2,593.2 L320.2,595.8 L322.2,598.5 L324.2,595.7 L326.2,590.0 L328.2,581.2 L330.3,578.9 L332.3,578.4 L334.3,579.8 L336.3,581.2 L338.3,584.8 L340.3,587.8 L342.3,593.1 L344.3,597.2 L346.3,597.2 L348.4,592.0 L350.4,584.4 L352.4,581.6 L354.4,580.1 L356.4,581.5 L358.4,580.4 L360.4,583.0 L362.4,582.7 L364.4,589.9 L366.5,595.3 L368.5,598.1 L370.5,598.6 L372.5,593.0 L374.5,585.4 L376.5,580.9 L378.5,578.1 L380.5,582.2 L382.5,581.4 L384.6,584.3 L386.6,585.0 L388.6,588.4 L390.6,594.9 L392.6,596.9 L394.6,598.6 L396.6,592.8 L398.6,588.8 L400.6,583.5 L402.7,578.9 L404.7,578.4 L406.7,578.4 L408.7,582.7 L410.7,584.0 L412.7,586.0 L414.7,591.1 L416.7,595.8 L418.7,598.2 L420.8,592.1 L422.8,585.8 L424.8,579.9 L426.8,577.8 L428.8,577.9 L430.8,580.4 L432.8,580.0 L434.8,583.5 L436.8,588.7 L438.9,595.0 L440.9,598.2 L442.9,599.5 L444.9,593.5 L446.9,586.6 L448.9,581.5 L450.9,579.5 L452.9,580.0 L454.9,578.6 L457.0,581.5 L459.0,585.6 L461.0,587.3 L463.0,592.7 L465.0,597.1 L467.0,596.8 L469.0,593.1 L471.0,588.2 L473.0,583.8 L475.1,578.6 L477.1,579.2 L479.1,581.2 L481.1,584.4 L483.1,584.2 L485.1,590.0 L487.1,594.6 L489.1,598.1 L491.1,597.8 L493.2,598.1 L495.2,588.2 L497.2,583.4 L499.2,579.7 L501.2,581.6 L503.2,582.1 L505.2,588.2 L507.2,584.2 L509.2,591.2 L511.3,594.0 L513.3,596.7 L515.3,598.9 L517.3,593.9 L519.3,588.0 L521.3,584.8 L523.3,579.7 L525.3,578.9 L527.3,579.8 L529.4,581.0 L531.4,585.8 L533.4,587.8 L535.4,593.2 L537.4,595.6 L539.4,599.1 L541.4,592.7 L543.4,586.7 L545.4,580.8 L547.5,578.4 L549.5,581.6 L551.5,582.8 L553.5,584.4 L555.5,585.4 L557.5,589.5 L559.5,593.1 L561.5,597.6 L563.5,596.3 L565.6,593.7 L567.6,586.9 L569.6,580.7 L571.6,578.1 L573.6,580.0 L575.6,580.3 L577.6,584.3 L579.6,586.8 L581.6,589.5 L583.7,592.8 L585.7,596.9 L587.7,597.4 L589.7,594.4 L591.7,589.5 L593.7,581.7 L595.7,580.2 L597.7,578.9 L599.7,580.3 L601.8,581.1 L603.8,586.1 L605.8,591.2 L607.8,594.1 L609.8,597.1 L611.8,598.2 L613.8,592.5 L615.8,587.0 L617.8,581.1 L619.9,580.2 L621.9,580.6 L623.9,581.5 L625.9,582.7 L627.9,583.5 L629.9,588.8 L631.9,595.5 L633.9,597.3 L635.9,600.4 L638.0,594.7 L640.0,588.2 L642.0,582.2 L644.0,578.7 L646.0,578.2 L648.0,579.7 L650.0,581.4 L652.0,582.5 L654.0,586.9 L656.1,593.5 L658.1,595.8 L660.1,598.6 L662.1,594.7 L664.1,588.0 L666.1,581.9 L668.1,579.1 L670.1,579.7 L672.1,577.0 L674.2,580.1 L676.2,583.9 L678.2,588.9 L680.2,592.0 L682.2,597.7 L684.2,596.7 L686.2,594.4 L688.2,584.6 L690.2,580.2 L692.3,577.2 L694.3,575.1 L696.3,579.0 L698.3,580.3 L700.3,581.8 L702.3,589.1 L704.3,592.6 L706.3,594.5 L708.3,594.7 L710.4,592.3 L712.4,585.8 L714.4,581.9 L716.4,578.8 L718.4,578.5 L720.4,577.7 L722.4,579.7 L724.4,581.3 L726.4,586.6 L728.5,594.1 L730.5,594.9 L732.5,599.3 L734.5,593.4 L736.5,583.0 L738.5,579.8 L740.5,577.3 L742.5,577.3 L744.5,576.7 L746.6,583.9 L748.6,586.6 L750.6,589.5 L752.6,594.7 L754.6,595.0 L756.6,597.1 L758.6,593.8 L760.6,587.0 L762.6,581.8 L764.7,578.8 L766.7,581.5 L768.7,580.0 L770.7,584.6 L772.7,586.0 L774.7,590.0 L776.7,590.7 L778.7,599.4 L780.7,598.3 L782.8,594.5 L784.8,587.3 L786.8,583.3 L788.8,583.8 L790.8,581.5 L792.8,580.5 L794.8,582.3 L796.8,586.0 L798.8,590.9 L800.9,594.5 L802.9,596.3 L804.9,599.4 L806.9,593.8 L808.9,588.7 L810.9,581.7 L812.9,577.7 L814.9,580.2 L816.9,579.3 L819.0,584.7 L821.0,586.0 L823.0,589.4 L825.0,592.8 L827.0,595.8" fill="none" stroke="#316395" stroke-width="2" stroke-linejoin="round"/><path d="M103.0,588.5 L105.0,588.7 L107.0,587.7 L109.0,584.7 L111.0,580.8 L113.1,580.8 L115.1,577.5 L117.1,579.2 L119.1,580.2 L121.1,582.9 L123.1,584.4 L125.1,587.4 L127.1,588.4 L129.1,590.2 L131.2,586.9 L133.2,584.2 L135.2,580.8 L137.2,578.8 L139.2,580.6 L141.2,580.5 L143.2,582.0 L145.2,582.2 L147.2,584.9 L149.3,587.3 L151.3,588.7 L153.3,590.7 L155.3,588.6 L157.3,583.9 L159.3,581.7 L161.3,580.1 L163.3,579.1 L165.3,579.7 L167.4,580.9 L169.4,581.1 L171.4,584.6 L173.4,586.8 L175.4,589.1 L177.4,589.4 L179.4,586.8 L181.4,582.9 L183.4,579.9 L185.5,579.0 L187.5,578.7 L189.5,579.1 L191.5,579.7 L193.5,581.0 L195.5,584.8 L197.5,587.3 L199.5,589.5 L201.5,588.8 L203.6,587.1 L205.6,583.1 L207.6,580.9 L209.6,579.2 L211.6,579.7 L213.6,582.7 L215.6,582.0 L217.6,582.6 L219.6,585.2 L221.7,587.5 L223.7,589.5 L225.7,591.1 L227.7,588.1 L229.7,584.2 L231.7,580.2 L233.7,579.6 L235.7,580.7 L237.7,582.7 L239.8,581.9 L241.8,582.2 L243.8,585.1 L245.8,587.9 L247.8,588.1 L249.8,588.2 L251.8,586.6 L253.8,583.4 L255.8,579.8 L257.9,579.9 L259.9,579.1 L261.9,580.9 L263.9,581.3 L265.9,582.3 L267.9,585.4 L269.9,589.5 L271.9,589.4 L273.9,589.2 L276.0,586.0 L278.0,583.2 L280.0,580.0 L282.0,578.9 L284.0,579.0 L286.0,579.9 L288.0,580.9 L290.0,582.1 L292.0,585.0 L294.1,587.2 L296.1,588.4 L298.1,590.3 L300.1,586.6 L302.1,583.6 L304.1,579.1 L306.1,578.5 L308.1,578.5 L310.1,579.3 L312.2,581.5 L314.2,582.5 L316.2,585.2 L318.2,588.0 L320.2,589.0 L322.2,589.1 L324.2,587.0 L326.2,584.4 L328.2,581.0 L330.3,579.6 L332.3,581.0 L334.3,579.3 L336.3,581.3 L338.3,581.9 L340.3,585.5 L342.3,587.7 L344.3,589.1 L346.3,588.4 L348.4,586.2 L350.4,582.5 L352.4,581.4 L354.4,579.4 L356.4,580.7 L358.4,580.1 L360.4,581.0 L362.4,581.3 L364.4,585.0 L366.5,587.7 L368.5,588.4 L370.5,589.1 L372.5,586.7 L374.5,582.5 L376.5,580.6 L378.5,578.6 L380.5,579.9 L382.5,579.7 L384.6,580.9 L386.6,582.4 L388.6,585.1 L390.6,586.7 L392.6,589.0 L394.6,589.3 L396.6,587.6 L398.6,583.5 L400.6,580.3 L402.7,578.6 L404.7,580.3 L406.7,580.8 L408.7,581.3 L410.7,582.3 L412.7,583.6 L414.7,586.2 L416.7,589.4 L418.7,588.4 L420.8,586.6 L422.8,582.8 L424.8,580.5 L426.8,579.1 L428.8,579.2 L430.8,579.7 L432.8,581.1 L434.8,581.5 L436.8,584.9 L438.9,588.2 L440.9,589.6 L442.9,589.6 L444.9,587.6 L446.9,584.4 L448.9,580.7 L450.9,579.7 L452.9,581.9 L454.9,579.5 L457.0,581.5 L459.0,582.6 L461.0,585.8 L463.0,586.9 L465.0,589.1 L467.0,588.6 L469.0,587.4 L471.0,585.4 L473.0,581.8 L475.1,579.6 L477.1,579.9 L479.1,580.1 L481.1,581.9 L483.1,583.0 L485.1,584.6 L487.1,587.6 L489.1,588.8 L491.1,590.1 L493.2,586.9 L495.2,583.7 L497.2,581.6 L499.2,580.3 L501.2,577.9 L503.2,580.6 L505.2,581.5 L507.2,582.4 L509.2,584.4 L511.3,587.4 L513.3,590.0 L515.3,589.3 L517.3,588.9 L519.3,584.5 L521.3,581.5 L523.3,579.3 L525.3,581.4 L527.3,580.1 L529.4,582.7 L531.4,583.0 L533.4,585.0 L535.4,587.0 L537.4,588.2 L539.4,590.1 L541.4,586.5 L543.4,583.8 L545.4,579.8 L547.5,578.6 L549.5,580.2 L551.5,580.8 L553.5,579.6 L555.5,582.6 L557.5,585.0 L559.5,587.6 L561.5,588.4 L563.5,589.3 L565.6,587.5 L567.6,583.2 L569.6,580.4 L571.6,579.1 L573.6,579.2 L575.6,579.0 L577.6,579.9 L579.6,581.9 L581.6,584.3 L583.7,586.1 L585.7,588.0 L587.7,588.5 L589.7,586.5 L591.7,583.2 L593.7,580.4 L595.7,579.1 L597.7,580.3 L599.7,580.7 L601.8,581.2 L603.8,582.4 L605.8,585.8 L607.8,588.2 L609.8,588.0 L611.8,589.6 L613.8,587.7 L615.8,584.5 L617.8,581.6 L619.9,580.0 L621.9,580.9 L623.9,580.4 L625.9,581.0 L627.9,582.0 L629.9,585.2 L631.9,586.7 L633.9,587.7 L635.9,589.6 L638.0,587.4 L640.0,585.3 L642.0,581.0 L644.0,580.7 L646.0,580.7 L648.0,579.7 L650.0,581.8 L652.0,582.7 L654.0,584.8 L656.1,586.3 L658.1,587.5 L660.1,589.2 L662.1,586.5 L664.1,584.2 L666.1,580.9 L668.1,580.6 L670.1,579.0 L672.1,580.2 L674.2,580.3 L676.2,581.9 L678.2,584.7 L680.2,586.3 L682.2,588.5 L684.2,588.6 L686.2,585.6 L688.2,582.3 L690.2,580.4 L692.3,579.0 L694.3,579.8 L696.3,579.4 L698.3,582.2 L700.3,582.1 L702.3,587.0 L704.3,587.3 L706.3,588.1 L708.3,589.4 L710.4,587.1 L712.4,584.2 L714.4,582.7 L716.4,579.9 L718.4,579.0 L720.4,579.3 L722.4,579.7 L724.4,580.9 L726.4,584.3 L728.5,587.2 L730.5,590.7 L732.5,589.5 L734.5,585.7 L736.5,583.2 L738.5,582.5 L740.5,578.9 L742.5,578.5 L744.5,580.1 L746.6,581.6 L748.6,582.7 L750.6,585.1 L752.6,587.2 L754.6,588.1 L756.6,589.0 L758.6,585.7 L760.6,583.0 L762.6,580.8 L764.7,579.8 L766.7,579.9 L768.7,580.9 L770.7,581.8 L772.7,582.1 L774.7,585.0 L776.7,587.3 L778.7,589.0 L780.7,589.6 L782.8,587.1 L784.8,583.2 L786.8,581.8 L788.8,580.2 L790.8,580.9 L792.8,581.6 L794.8,581.0 L796.8,582.7 L798.8,585.9 L800.9,587.2 L802.9,588.3 L804.9,589.4 L806.9,586.7 L808.9,584.8 L810.9,581.5 L812.9,580.3 L814.9,579.9 L816.9,580.2 L819.0,581.5 L821.0,583.9 L823.0,585.7 L825.0,587.3 L827.0,588.6" fill="none" stroke="#ff9900" stroke-width="2" stroke-linejoin="round"/><path d="M103.0,585.0 L105.0,583.7 L107.0,582.7 L109.0,581.9 L111.0,581.2 L113.1,580.7 L115.1,580.2 L117.1,579.9 L119.1,579.6 L121.1,579.3 L123.1,579.1 L125.1,579.0 L127.1,578.8 L129.1,578.7 L131.2,578.7 L133.2,578.6 L135.2,578.5 L137.2,578.5 L139.2,578.3 L141.2,578.3 L143.2,578.3 L145.2,578.3 L147.2,578.3 L149.3,578.3 L151.3,578.3 L153.3,578.3 L155.3,578.3 L157.3,578.3 L159.3,578.3 L161.3,578.3 L163.3,578.3 L165.3,578.3 L167.4,578.3 L169.4,578.3 L171.4,578.3 L173.4,578.3 L175.4,578.3 L177.4,578.3 L179.4,578.3 L181.4,578.3 L183.4,578.3 L185.5,578.3 L187.5,578.3 L189.5,578.3 L191.5,578.3 L193.5,578.3 L195.5,578.3 L197.5,578.3 L199.5,578.3 L201.5,578.3 L203.6,578.3 L205.6,578.3 L207.6,578.3 L209.6,578.3 L211.6,578.3 L213.6,578.3 L215.6,578.3 L217.6,578.3 L219.6,578.3 L221.7,578.3 L223.7,578.3 L225.7,578.3 L227.7,578.3 L229.7,578.3 L231.7,578.3 L233.7,578.3 L235.7,578.3 L237.7,578.3 L239.8,578.3 L241.8,578.3 L243.8,578.3 L245.8,578.3 L247.8,578.3 L249.8,578.3 L251.8,578.3 L253.8,578.3 L255.8,578.3 L257.9,578.3 L259.9,578.3 L261.9,578.3 L263.9,578.3 L265.9,578.3 L267.9,578.3 L269.9,578.3 L271.9,578.3 L273.9,578.3 L276.0,578.3 L278.0,578.3 L280.0,578.3 L282.0,578.3 L284.0,578.3 L286.0,578.3 L288.0,578.3 L290.0,578.3 L292.0,578.3 L294.1,578.3 L296.1,578.3 L298.1,578.3 L300.1,578.3 L302.1,578.3 L304.1,578.3 L306.1,578.3 L308.1,578.3 L310.1,578.3 L312.2,578.3 L314.2,578.3 L316.2,578.3 L318.2,578.3 L320.2,578.3 L322.2,578.3 L324.2,578.3 L326.2,578.3 L328.2,578.3 L330.3,578.3 L332.3,578.3 L334.3,578.3 L336.3,578.3 L338.3,578.3 L340.3,578.3 L342.3,578.3 L344.3,578.3 L346.3,578.3 L348.4,578.3 L350.4,578.3 L352.4,578.3 L354.4,578.3 L356.4,578.3 L358.4,578.3 L360.4,578.3 L362.4,578.3 L364.4,578.3 L366.5,578.3 L368.5,578.3 L370.5,578.3 L372.5,578.3 L374.5,578.3 L376.5,578.3 L378.5,578.3 L380.5,578.3 L382.5,578.3 L384.6,578.3 L386.6,578.3 L388.6,578.3 L390.6,578.3 L392.6,578.3 L394.6,578.3 L396.6,578.3 L398.6,578.3 L400.6,578.3 L402.7,578.3 L404.7,578.3 L406.7,578.3 L408.7,578.3 L410.7,578.3 L412.7,578.3 L414.7,578.3 L416.7,578.3 L418.7,578.3 L420.8,578.3 L422.8,578.3 L424.8,578.3 L426.8,578.3 L428.8,578.3 L430.8,578.4 L432.8,578.5 L434.8,578.5 L436.8,578.6 L438.9,578.6 L440.9,578.7 L442.9,578.8 L444.9,578.8 L446.9,578.9 L448.9,578.9 L450.9,579.0 L452.9,579.1 L454.9,579.1 L457.0,579.2 L459.0,579.3 L461.0,579.3 L463.0,579.4 L465.0,579.4 L467.0,579.5 L469.0,579.6 L471.0,579.6 L473.0,579.7 L475.1,579.7 L477.1,579.8 L479.1,579.9 L481.1,579.9 L483.1,580.0 L485.1,580.1 L487.1,580.1 L489.1,580.2 L491.1,580.2 L493.2,580.3 L495.2,580.4 L497.2,580.4 L499.2,580.5 L501.2,580.5 L503.2,580.6 L505.2,580.7 L507.2,580.7 L509.2,580.8 L511.3,580.9 L513.3,580.9 L515.3,581.0 L517.3,581.0 L519.3,581.1 L521.3,581.2 L523.3,581.2 L525.3,581.3 L527.3,581.3 L529.4,581.4 L531.4,581.5 L533.4,581.5 L535.4,581.6 L537.4,581.7 L539.4,581.7 L541.4,581.8 L543.4,581.8 L545.4,581.9 L547.5,582.0 L549.5,582.0 L551.5,582.1 L553.5,582.1 L555.5,582.2 L557.5,582.3 L559.5,582.3 L561.5,582.4 L563.5,582.5 L565.6,582.5 L567.6,582.6 L569.6,582.6 L571.6,582.7 L573.6,582.8 L575.6,582.8 L577.6,582.9 L579.6,583.0 L581.6,583.0 L583.7,583.1 L585.7,583.1 L587.7,583.2 L589.7,583.3 L591.7,583.3 L593.7,583.4 L595.7,583.4 L597.7,583.5 L599.7,583.6 L601.8,583.6 L603.8,583.7 L605.8,583.8 L607.8,583.8 L609.8,583.9 L611.8,583.9 L613.8,584.0 L615.8,584.1 L617.8,584.1 L619.9,584.2 L621.9,584.2 L623.9,584.3 L625.9,584.4 L627.9,584.4 L629.9,584.5 L631.9,584.6 L633.9,584.6 L635.9,584.7 L638.0,584.7 L640.0,584.8 L642.0,584.9 L644.0,584.9 L646.0,585.0 L648.0,585.0 L650.0,585.1 L652.0,585.2 L654.0,585.2 L656.1,585.3 L658.1,585.4 L660.1,585.4 L662.1,585.5 L664.1,585.5 L666.1,585.6 L668.1,585.7 L670.1,585.7 L672.1,585.8 L674.2,585.8 L676.2,585.9 L678.2,586.0 L680.2,586.0 L682.2,586.1 L684.2,586.2 L686.2,586.2 L688.2,586.3 L690.2,586.3 L692.3,586.4 L694.3,586.5 L696.3,586.5 L698.3,586.6 L700.3,586.6 L702.3,586.7 L704.3,586.8 L706.3,586.8 L708.3,586.9 L710.4,587.0 L712.4,587.0 L714.4,587.1 L716.4,587.1 L718.4,587.2 L720.4,587.3 L722.4,587.3 L724.4,587.4 L726.4,587.4 L728.5,587.5 L730.5,587.6 L732.5,587.6 L734.5,587.7 L736.5,587.8 L738.5,587.8 L740.5,587.9 L742.5,587.9 L744.5,588.0 L746.6,588.1 L748.6,588.1 L750.6,588.2 L752.6,588.2 L754.6,588.3 L756.6,588.4 L758.6,588.4 L760.6,588.5 L762.6,588.6 L764.7,588.6 L766.7,588.7 L768.7,588.7 L770.7,588.8 L772.7,588.9 L774.7,588.9 L776.7,589.0 L778.7,589.1 L780.7,589.1 L782.8,589.2 L784.8,589.2 L786.8,589.3 L788.8,589.4 L790.8,589.4 L792.8,589.5 L794.8,589.5 L796.8,589.6 L798.8,589.7 L800.9,589.7 L802.9,589.8 L804.9,589.9 L806.9,589.9 L808.9,590.0 L810.9,590.0 L812.9,590.1 L814.9,590.2 L816.9,590.2 L819.0,590.3 L821.0,590.3 L823.0,590.4 L825.0,590.5 L827.0,590.5" fill="none" stroke="#990099" stroke-width="2" stroke-linejoin="round"/><path d="M103.0,540.1 L105.0,532.4 L107.0,528.5 L109.0,521.4 L111.0,513.0 L113.1,506.7 L115.1,506.1 L117.1,509.0 L119.1,510.3 L121.1,512.2 L123.1,518.9 L125.1,525.5 L127.1,537.2 L129.1,535.8 L131.2,529.4 L133.2,522.0 L135.2,518.0 L137.2,506.5 L139.2,504.7 L141.2,507.0 L143.2,510.3 L145.2,511.4 L147.2,517.9 L149.3,527.9 L151.3,535.6 L153.3,535.2 L155.3,527.8 L157.3,520.5 L159.3,514.3 L161.3,506.7 L163.3,506.3 L165.3,505.7 L167.4,508.4 L169.4,510.2 L171.4,518.2 L173.4,527.9 L175.4,537.3 L177.4,535.0 L179.4,525.2 L181.4,517.3 L183.4,509.0 L185.5,504.2 L187.5,503.2 L189.5,504.1 L191.5,506.2 L193.5,509.1 L195.5,518.3 L197.5,528.4 L199.5,542.3 L201.5,541.4 L203.6,527.0 L205.6,516.8 L207.6,511.7 L209.6,505.6 L211.6,508.9 L213.6,508.0 L215.6,510.8 L217.6,515.5 L219.6,519.1 L221.7,530.8 L223.7,538.3 L225.7,538.8 L227.7,529.0 L229.7,520.6 L231.7,511.8 L233.7,506.7 L235.7,505.4 L237.7,505.8 L239.8,508.6 L241.8,512.6 L243.8,517.9 L245.8,526.5 L247.8,535.1 L249.8,530.0 L251.8,523.1 L253.8,512.3 L255.8,509.4 L257.9,506.5 L259.9,508.1 L261.9,508.3 L263.9,510.5 L265.9,513.6 L267.9,519.3 L269.9,523.2 L271.9,529.5 L273.9,532.8 L276.0,525.1 L278.0,518.4 L280.0,512.7 L282.0,507.1 L284.0,507.9 L286.0,510.6 L288.0,513.8 L290.0,515.8 L292.0,521.0 L294.1,529.6 L296.1,538.6 L298.1,534.4 L300.1,526.3 L302.1,518.9 L304.1,512.3 L306.1,508.5 L308.1,505.4 L310.1,508.9 L312.2,511.3 L314.2,515.1 L316.2,520.2 L318.2,537.5 L320.2,540.5 L322.2,534.8 L324.2,530.2 L326.2,519.6 L328.2,515.6 L330.3,509.6 L332.3,507.1 L334.3,509.6 L336.3,513.5 L338.3,517.5 L340.3,521.6 L342.3,529.6 L344.3,536.0 L346.3,530.7 L348.4,524.7 L350.4,519.4 L352.4,512.4 L354.4,509.5 L356.4,508.7 L358.4,509.2 L360.4,511.7 L362.4,513.9 L364.4,521.1 L366.5,530.9 L368.5,539.8 L370.5,533.8 L372.5,523.4 L374.5,515.7 L376.5,510.7 L378.5,507.8 L380.5,504.8 L382.5,504.9 L384.6,510.2 L386.6,512.3 L388.6,519.2 L390.6,532.9 L392.6,544.5 L394.6,536.7 L396.6,529.1 L398.6,518.0 L400.6,505.8 L402.7,504.3 L404.7,504.9 L406.7,508.4 L408.7,508.2 L410.7,511.3 L412.7,512.3 L414.7,520.6 L416.7,532.9 L418.7,531.2 L420.8,522.8 L422.8,518.2 L424.8,510.0 L426.8,508.7 L428.8,509.1 L430.8,507.7 L432.8,510.3 L434.8,512.2 L436.8,520.8 L438.9,526.7 L440.9,539.1 L442.9,536.5 L444.9,525.0 L446.9,511.8 L448.9,509.8 L450.9,509.7 L452.9,504.3 L454.9,505.6 L457.0,510.0 L459.0,513.3 L461.0,530.7 L463.0,530.2 L465.0,534.3 L467.0,530.4 L469.0,526.5 L471.0,519.4 L473.0,513.3 L475.1,506.1 L477.1,507.3 L479.1,513.1 L481.1,514.4 L483.1,516.6 L485.1,521.1 L487.1,530.7 L489.1,537.6 L491.1,536.6 L493.2,535.1 L495.2,522.1 L497.2,519.4 L499.2,510.3 L501.2,506.9 L503.2,508.0 L505.2,514.1 L507.2,515.1 L509.2,521.8 L511.3,530.9 L513.3,539.8 L515.3,535.0 L517.3,527.9 L519.3,521.9 L521.3,515.2 L523.3,508.1 L525.3,505.2 L527.3,508.7 L529.4,510.8 L531.4,517.0 L533.4,519.4 L535.4,528.1 L537.4,538.5 L539.4,534.9 L541.4,525.3 L543.4,517.3 L545.4,509.5 L547.5,504.6 L549.5,504.2 L551.5,507.3 L553.5,508.7 L555.5,513.3 L557.5,519.1 L559.5,527.2 L561.5,536.1 L563.5,533.1 L565.6,533.7 L567.6,520.0 L569.6,512.6 L571.6,504.9 L573.6,506.4 L575.6,508.9 L577.6,512.4 L579.6,514.0 L581.6,520.4 L583.7,530.5 L585.7,538.5 L587.7,533.7 L589.7,526.0 L591.7,524.4 L593.7,512.4 L595.7,508.1 L597.7,506.5 L599.7,508.8 L601.8,512.0 L603.8,514.0 L605.8,521.3 L607.8,528.0 L609.8,533.3 L611.8,532.4 L613.8,526.6 L615.8,521.0 L617.8,514.2 L619.9,511.9 L621.9,504.6 L623.9,506.6 L625.9,507.0 L627.9,510.8 L629.9,509.9 L631.9,521.2 L633.9,536.4 L635.9,532.9 L638.0,527.3 L640.0,520.5 L642.0,510.7 L644.0,505.6 L646.0,506.7 L648.0,509.3 L650.0,509.7 L652.0,512.1 L654.0,512.2 L656.1,526.9 L658.1,536.8 L660.1,532.3 L662.1,523.8 L664.1,517.6 L666.1,511.5 L668.1,506.6 L670.1,505.3 L672.1,509.0 L674.2,510.4 L676.2,514.3 L678.2,528.5 L680.2,530.1 L682.2,536.8 L684.2,533.3 L686.2,523.0 L688.2,517.7 L690.2,508.2 L692.3,505.8 L694.3,503.7 L696.3,508.0 L698.3,508.6 L700.3,511.1 L702.3,519.8 L704.3,531.7 L706.3,535.7 L708.3,529.1 L710.4,523.1 L712.4,518.8 L714.4,513.5 L716.4,508.4 L718.4,505.1 L720.4,506.9 L722.4,510.0 L724.4,507.6 L726.4,521.8 L728.5,526.0 L730.5,533.9 L732.5,530.2 L734.5,526.4 L736.5,520.4 L738.5,511.4 L740.5,505.6 L742.5,505.0 L744.5,506.2 L746.6,512.3 L748.6,515.0 L750.6,519.5 L752.6,527.5 L754.6,537.8 L756.6,535.5 L758.6,532.3 L760.6,525.4 L762.6,513.5 L764.7,509.8 L766.7,508.9 L768.7,513.8 L770.7,509.4 L772.7,516.5 L774.7,525.9 L776.7,537.8 L778.7,535.9 L780.7,532.5 L782.8,524.6 L784.8,519.3 L786.8,513.5 L788.8,513.0 L790.8,510.8 L792.8,510.7 L794.8,514.6 L796.8,514.3 L798.8,520.9 L800.9,531.0 L802.9,542.7 L804.9,541.9 L806.9,528.8 L808.9,522.3 L810.9,515.8 L812.9,509.5 L814.9,504.7 L816.9,508.4 L819.0,512.5 L821.0,514.2 L823.0,517.1 L825.0,523.5 L827.0,533.5" fill="none" stroke="#66aa00" stroke-width="2" stroke-linejoin="round"/><path d="M103.0,558.6 L105.0,556.0 L107.0,551.6 L109.0,544.9 L111.0,537.6 L113.1,539.6 L115.1,535.2 L117.1,535.2 L119.1,537.8 L121.1,542.0 L123.1,546.0 L125.1,548.8 L127.1,554.6 L129.1,556.6 L131.2,551.7 L133.2,543.9 L135.2,537.4 L137.2,538.1 L139.2,535.8 L141.2,537.6 L143.2,537.9 L145.2,539.9 L147.2,545.1 L149.3,551.3 L151.3,553.7 L153.3,554.7 L155.3,550.6 L157.3,542.6 L159.3,538.5 L161.3,536.9 L163.3,536.0 L165.3,536.0 L167.4,538.1 L169.4,540.2 L171.4,545.5 L173.4,549.6 L175.4,555.3 L177.4,556.8 L179.4,551.3 L181.4,542.8 L183.4,536.9 L185.5,533.7 L187.5,530.9 L189.5,532.2 L191.5,536.2 L193.5,539.0 L195.5,546.4 L197.5,552.9 L199.5,557.2 L201.5,560.9 L203.6,551.7 L205.6,544.6 L207.6,536.7 L209.6,533.2 L211.6,534.1 L213.6,534.6 L215.6,538.5 L217.6,540.2 L219.6,546.8 L221.7,552.4 L223.7,553.7 L225.7,557.8 L227.7,552.3 L229.7,542.5 L231.7,536.9 L233.7,533.9 L235.7,531.1 L237.7,534.5 L239.8,538.2 L241.8,541.0 L243.8,543.8 L245.8,549.4 L247.8,553.1 L249.8,555.6 L251.8,549.2 L253.8,538.4 L255.8,535.1 L257.9,533.6 L259.9,535.0 L261.9,535.7 L263.9,537.4 L265.9,540.9 L267.9,546.9 L269.9,547.6 L271.9,550.6 L273.9,554.4 L276.0,549.8 L278.0,543.4 L280.0,536.8 L282.0,531.1 L284.0,536.0 L286.0,538.1 L288.0,539.6 L290.0,541.1 L292.0,546.0 L294.1,551.4 L296.1,553.6 L298.1,556.4 L300.1,551.6 L302.1,542.3 L304.1,537.8 L306.1,534.2 L308.1,533.4 L310.1,533.8 L312.2,538.8 L314.2,541.3 L316.2,547.4 L318.2,556.1 L320.2,556.2 L322.2,557.3 L324.2,551.3 L326.2,545.7 L328.2,537.9 L330.3,535.9 L332.3,531.4 L334.3,534.2 L336.3,537.0 L338.3,541.9 L340.3,546.7 L342.3,552.8 L344.3,553.4 L346.3,556.3 L348.4,548.5 L350.4,541.9 L352.4,536.6 L354.4,536.0 L356.4,537.7 L358.4,536.3 L360.4,538.0 L362.4,540.7 L364.4,545.2 L366.5,551.5 L368.5,555.8 L370.5,558.0 L372.5,549.6 L374.5,541.7 L376.5,536.7 L378.5,535.2 L380.5,535.7 L382.5,537.5 L384.6,539.3 L386.6,541.4 L388.6,547.5 L390.6,553.6 L392.6,555.8 L394.6,555.7 L396.6,553.1 L398.6,544.4 L400.6,537.3 L402.7,534.7 L404.7,535.5 L406.7,537.2 L408.7,539.8 L410.7,538.0 L412.7,543.4 L414.7,548.0 L416.7,551.9 L418.7,554.8 L420.8,550.5 L422.8,543.5 L424.8,538.1 L426.8,536.6 L428.8,538.6 L430.8,538.0 L432.8,540.0 L434.8,542.1 L436.8,546.3 L438.9,552.1 L440.9,555.7 L442.9,557.0 L444.9,550.2 L446.9,540.8 L448.9,538.1 L450.9,537.0 L452.9,534.7 L454.9,535.9 L457.0,537.0 L459.0,543.7 L461.0,552.7 L463.0,552.7 L465.0,555.5 L467.0,551.8 L469.0,551.8 L471.0,544.2 L473.0,538.2 L475.1,533.5 L477.1,533.9 L479.1,534.8 L481.1,539.9 L483.1,540.1 L485.1,546.3 L487.1,550.6 L489.1,554.2 L491.1,558.6 L493.2,556.4 L495.2,547.7 L497.2,537.6 L499.2,534.5 L501.2,534.4 L503.2,533.6 L505.2,538.0 L507.2,539.5 L509.2,547.2 L511.3,551.6 L513.3,555.4 L515.3,556.5 L517.3,552.3 L519.3,542.9 L521.3,537.4 L523.3,535.3 L525.3,535.9 L527.3,537.2 L529.4,540.0 L531.4,540.0 L533.4,544.5 L535.4,549.7 L537.4,555.0 L539.4,557.4 L541.4,549.7 L543.4,542.6 L545.4,537.2 L547.5,534.3 L549.5,536.9 L551.5,537.3 L553.5,540.1 L555.5,543.0 L557.5,545.7 L559.5,552.5 L561.5,551.2 L563.5,555.6 L565.6,556.1 L567.6,544.5 L569.6,538.0 L571.6,535.6 L573.6,536.5 L575.6,536.6 L577.6,535.5 L579.6,540.8 L581.6,544.4 L583.7,551.8 L585.7,553.4 L587.7,553.5 L589.7,550.5 L591.7,544.8 L593.7,538.7 L595.7,535.7 L597.7,533.1 L599.7,534.7 L601.8,535.6 L603.8,539.6 L605.8,545.4 L607.8,549.0 L609.8,552.1 L611.8,557.0 L613.8,550.7 L615.8,542.3 L617.8,537.4 L619.9,534.6 L621.9,534.4 L623.9,536.4 L625.9,538.0 L627.9,539.6 L629.9,542.6 L631.9,547.8 L633.9,554.1 L635.9,555.1 L638.0,551.5 L640.0,544.6 L642.0,538.4 L644.0,534.7 L646.0,538.7 L648.0,537.6 L650.0,539.7 L652.0,539.6 L654.0,541.7 L656.1,549.3 L658.1,552.9 L660.1,556.2 L662.1,550.0 L664.1,547.0 L666.1,539.8 L668.1,536.8 L670.1,535.3 L672.1,537.0 L674.2,538.1 L676.2,540.4 L678.2,548.3 L680.2,553.3 L682.2,552.9 L684.2,559.8 L686.2,550.3 L688.2,541.3 L690.2,535.4 L692.3,532.8 L694.3,536.0 L696.3,537.2 L698.3,539.8 L700.3,541.3 L702.3,547.5 L704.3,554.4 L706.3,553.4 L708.3,555.2 L710.4,549.8 L712.4,544.5 L714.4,541.5 L716.4,536.2 L718.4,535.1 L720.4,533.3 L722.4,536.6 L724.4,540.0 L726.4,543.3 L728.5,551.0 L730.5,551.7 L732.5,552.1 L734.5,550.5 L736.5,543.6 L738.5,535.7 L740.5,533.0 L742.5,534.6 L744.5,535.4 L746.6,538.5 L748.6,541.5 L750.6,545.1 L752.6,549.4 L754.6,552.5 L756.6,556.6 L758.6,553.0 L760.6,547.5 L762.6,538.5 L764.7,535.5 L766.7,534.9 L768.7,536.7 L770.7,538.9 L772.7,539.7 L774.7,548.7 L776.7,554.3 L778.7,553.6 L780.7,554.4 L782.8,550.5 L784.8,542.4 L786.8,536.4 L788.8,534.5 L790.8,535.5 L792.8,536.1 L794.8,537.8 L796.8,540.2 L798.8,545.9 L800.9,550.6 L802.9,558.4 L804.9,562.4 L806.9,552.9 L808.9,542.4 L810.9,535.7 L812.9,531.7 L814.9,534.0 L816.9,536.2 L819.0,538.2 L821.0,542.4 L823.0,546.7 L825.0,550.4 L827.0,550.3" fill="none" stroke="#b82e2e" stroke-width="2" stroke-linejoin="round"/><path d="M103.0,552.3 L105.0,552.0 L107.0,546.3 L109.0,537.7 L111.0,530.1 L113.1,526.9 L115.1,524.9 L117.1,526.8 L119.1,528.6 L121.1,533.9 L123.1,538.0 L125.1,544.0 L127.1,552.1 L129.1,555.3 L131.2,546.3 L133.2,537.8 L135.2,529.9 L137.2,524.5 L139.2,524.3 L141.2,526.4 L143.2,530.3 L145.2,532.0 L147.2,538.8 L149.3,545.5 L151.3,548.1 L153.3,553.2 L155.3,545.4 L157.3,536.7 L159.3,530.5 L161.3,526.5 L163.3,525.8 L165.3,525.6 L167.4,528.2 L169.4,532.4 L171.4,537.7 L173.4,547.6 L175.4,548.8 L177.4,552.0 L179.4,544.2 L181.4,533.4 L183.4,527.1 L185.5,521.5 L187.5,525.0 L189.5,526.4 L191.5,529.6 L193.5,531.6 L195.5,539.6 L197.5,547.6 L199.5,553.6 L201.5,556.2 L203.6,548.1 L205.6,536.6 L207.6,530.4 L209.6,526.8 L211.6,527.5 L213.6,529.8 L215.6,532.4 L217.6,535.6 L219.6,540.6 L221.7,547.9 L223.7,553.5 L225.7,555.2 L227.7,546.8 L229.7,537.7 L231.7,529.3 L233.7,527.0 L235.7,525.9 L237.7,527.1 L239.8,529.2 L241.8,532.0 L243.8,537.8 L245.8,543.9 L247.8,547.6 L249.8,549.7 L251.8,544.3 L253.8,534.5 L255.8,527.8 L257.9,524.8 L259.9,528.4 L261.9,528.7 L263.9,530.7 L265.9,532.7 L267.9,539.0 L269.9,542.7 L271.9,545.2 L273.9,551.1 L276.0,544.8 L278.0,537.8 L280.0,530.4 L282.0,524.7 L284.0,524.3 L286.0,526.1 L288.0,529.5 L290.0,533.9 L292.0,539.7 L294.1,545.1 L296.1,550.7 L298.1,550.2 L300.1,546.4 L302.1,534.8 L304.1,524.6 L306.1,522.4 L308.1,523.1 L310.1,526.7 L312.2,529.6 L314.2,532.4 L316.2,539.8 L318.2,550.1 L320.2,553.2 L322.2,552.2 L324.2,548.3 L326.2,538.7 L328.2,531.0 L330.3,526.3 L332.3,526.3 L334.3,527.5 L336.3,531.1 L338.3,534.4 L340.3,539.8 L342.3,547.8 L344.3,552.6 L346.3,549.6 L348.4,545.1 L350.4,535.1 L352.4,528.3 L354.4,527.4 L356.4,529.7 L358.4,528.7 L360.4,531.9 L362.4,532.3 L364.4,538.9 L366.5,547.6 L368.5,550.6 L370.5,551.8 L372.5,543.2 L374.5,535.8 L376.5,527.5 L378.5,528.8 L380.5,525.3 L382.5,525.8 L384.6,528.3 L386.6,533.1 L388.6,540.5 L390.6,548.8 L392.6,556.2 L394.6,555.0 L396.6,545.7 L398.6,535.8 L400.6,526.7 L402.7,522.6 L404.7,524.0 L406.7,525.9 L408.7,527.2 L410.7,530.3 L412.7,532.7 L414.7,538.8 L416.7,546.5 L418.7,549.5 L420.8,543.8 L422.8,533.2 L424.8,523.0 L426.8,523.3 L428.8,524.8 L430.8,523.9 L432.8,527.6 L434.8,529.9 L436.8,537.0 L438.9,549.5 L440.9,549.7 L442.9,551.5 L444.9,542.6 L446.9,530.4 L448.9,525.1 L450.9,522.0 L452.9,524.8 L454.9,523.6 L457.0,529.4 L459.0,536.4 L461.0,546.5 L463.0,546.7 L465.0,547.2 L467.0,549.6 L469.0,546.1 L471.0,538.2 L473.0,531.0 L475.1,524.8 L477.1,527.9 L479.1,528.4 L481.1,533.3 L483.1,539.4 L485.1,540.5 L487.1,547.3 L489.1,550.0 L491.1,552.5 L493.2,552.0 L495.2,542.1 L497.2,532.1 L499.2,527.9 L501.2,525.6 L503.2,526.0 L505.2,528.3 L507.2,531.9 L509.2,542.5 L511.3,547.7 L513.3,551.1 L515.3,552.4 L517.3,546.8 L519.3,536.6 L521.3,529.4 L523.3,524.5 L525.3,521.0 L527.3,525.4 L529.4,527.5 L531.4,532.3 L533.4,536.7 L535.4,544.8 L537.4,548.6 L539.4,551.1 L541.4,545.1 L543.4,533.7 L545.4,526.3 L547.5,522.9 L549.5,525.3 L551.5,527.0 L553.5,526.6 L555.5,531.8 L557.5,539.3 L559.5,547.1 L561.5,548.1 L563.5,553.1 L565.6,552.1 L567.6,537.7 L569.6,527.3 L571.6,523.8 L573.6,523.4 L575.6,524.6 L577.6,528.8 L579.6,531.2 L581.6,535.9 L583.7,544.8 L585.7,548.5 L587.7,550.9 L589.7,547.3 L591.7,534.1 L593.7,527.5 L595.7,522.7 L597.7,526.5 L599.7,526.4 L601.8,531.4 L603.8,534.1 L605.8,539.5 L607.8,543.8 L609.8,546.3 L611.8,548.8 L613.8,545.1 L615.8,536.8 L617.8,531.7 L619.9,526.8 L621.9,527.6 L623.9,528.5 L625.9,530.8 L627.9,531.4 L629.9,535.3 L631.9,541.2 L633.9,548.8 L635.9,553.2 L638.0,547.5 L640.0,538.6 L642.0,531.7 L644.0,526.6 L646.0,525.5 L648.0,526.4 L650.0,528.7 L652.0,530.1 L654.0,535.4 L656.1,542.3 L658.1,549.8 L660.1,551.8 L662.1,543.6 L664.1,535.0 L666.1,526.3 L668.1,521.8 L670.1,526.2 L672.1,525.8 L674.2,529.3 L676.2,532.1 L678.2,541.6 L680.2,545.0 L682.2,547.5 L684.2,550.9 L686.2,542.7 L688.2,529.7 L690.2,527.0 L692.3,522.6 L694.3,524.8 L696.3,525.3 L698.3,529.5 L700.3,532.4 L702.3,540.7 L704.3,549.3 L706.3,547.2 L708.3,547.9 L710.4,543.8 L712.4,536.3 L714.4,530.6 L716.4,525.6 L718.4,523.6 L720.4,524.5 L722.4,527.5 L724.4,531.3 L726.4,536.7 L728.5,546.1 L730.5,545.8 L732.5,547.3 L734.5,542.1 L736.5,536.0 L738.5,528.7 L740.5,523.3 L742.5,527.5 L744.5,528.2 L746.6,531.8 L748.6,534.2 L750.6,539.4 L752.6,545.7 L754.6,548.9 L756.6,554.5 L758.6,550.1 L760.6,539.8 L762.6,529.8 L764.7,528.4 L766.7,524.1 L768.7,526.8 L770.7,530.8 L772.7,533.3 L774.7,545.5 L776.7,551.3 L778.7,549.7 L780.7,552.8 L782.8,543.6 L784.8,535.7 L786.8,528.3 L788.8,525.6 L790.8,526.2 L792.8,525.2 L794.8,529.0 L796.8,531.1 L798.8,538.0 L800.9,547.1 L802.9,552.2 L804.9,560.3 L806.9,546.8 L808.9,536.3 L810.9,528.2 L812.9,523.7 L814.9,522.4 L816.9,524.7 L819.0,530.1 L821.0,529.9 L823.0,540.2 L825.0,543.5 L827.0,546.8" fill="none" stroke="#dc3912" stroke-width="2" stroke-linejoin="round"/><path d="M103.0,593.9 L105.0,595.1 L107.0,587.6 L109.0,567.8 L111.0,543.2 L113.1,533.7 L115.1,535.4 L117.1,535.7 L119.1,539.9 L121.1,548.4 L123.1,560.4 L125.1,570.2 L127.1,587.3 L129.1,596.5 L131.2,589.6 L133.2,568.3 L135.2,552.8 L137.2,530.8 L139.2,528.6 L141.2,535.9 L143.2,540.2 L145.2,544.0 L147.2,562.2 L149.3,578.5 L151.3,584.1 L153.3,591.2 L155.3,587.0 L157.3,564.1 L159.3,543.6 L161.3,532.1 L163.3,536.2 L165.3,538.5 L167.4,541.3 L169.4,544.7 L171.4,562.9 L173.4,579.5 L175.4,586.8 L177.4,594.1 L179.4,581.0 L181.4,563.9 L183.4,541.3 L185.5,534.7 L187.5,531.9 L189.5,534.9 L191.5,541.2 L193.5,547.5 L195.5,565.8 L197.5,585.4 L199.5,596.0 L201.5,598.1 L203.6,593.8 L205.6,567.3 L207.6,547.6 L209.6,539.4 L211.6,532.6 L213.6,535.9 L215.6,539.1 L217.6,545.6 L219.6,563.8 L221.7,584.5 L223.7,596.9 L225.7,597.3 L227.7,593.0 L229.7,563.3 L231.7,540.4 L233.7,527.3 L235.7,534.0 L237.7,533.5 L239.8,542.4 L241.8,546.4 L243.8,558.3 L245.8,578.7 L247.8,585.2 L249.8,585.2 L251.8,582.6 L253.8,561.1 L255.8,542.3 L257.9,534.2 L259.9,534.8 L261.9,539.3 L263.9,542.0 L265.9,546.5 L267.9,563.2 L269.9,567.8 L271.9,576.8 L273.9,590.0 L276.0,585.4 L278.0,565.1 L280.0,544.0 L282.0,532.7 L284.0,530.1 L286.0,536.0 L288.0,543.1 L290.0,547.8 L292.0,566.6 L294.1,581.8 L296.1,588.3 L298.1,595.0 L300.1,589.9 L302.1,563.4 L304.1,541.1 L306.1,528.7 L308.1,527.7 L310.1,531.7 L312.2,536.7 L314.2,546.6 L316.2,565.6 L318.2,594.1 L320.2,595.6 L322.2,593.9 L324.2,593.1 L326.2,566.2 L328.2,547.9 L330.3,534.7 L332.3,531.3 L334.3,531.5 L336.3,538.6 L338.3,545.8 L340.3,562.1 L342.3,580.6 L344.3,584.6 L346.3,587.6 L348.4,590.0 L350.4,559.4 L352.4,540.5 L354.4,532.4 L356.4,538.6 L358.4,537.3 L360.4,538.2 L362.4,547.2 L364.4,562.4 L366.5,580.4 L368.5,591.4 L370.5,587.7 L372.5,581.1 L374.5,556.8 L376.5,538.8 L378.5,533.3 L380.5,534.4 L382.5,533.9 L384.6,541.3 L386.6,546.8 L388.6,567.8 L390.6,589.2 L392.6,597.6 L394.6,597.0 L396.6,592.5 L398.6,565.1 L400.6,540.4 L402.7,530.3 L404.7,537.6 L406.7,540.3 L408.7,544.2 L410.7,548.1 L412.7,553.2 L414.7,567.8 L416.7,584.1 L418.7,590.2 L420.8,585.4 L422.8,562.4 L424.8,545.2 L426.8,536.7 L428.8,530.0 L430.8,529.7 L432.8,538.7 L434.8,542.9 L436.8,562.7 L438.9,582.2 L440.9,590.8 L442.9,592.7 L444.9,583.5 L446.9,546.8 L448.9,532.6 L450.9,526.7 L452.9,537.3 L454.9,535.6 L457.0,542.4 L459.0,557.0 L461.0,583.7 L463.0,583.7 L465.0,585.6 L467.0,586.4 L469.0,587.8 L471.0,569.7 L473.0,548.6 L475.1,535.0 L477.1,534.8 L479.1,540.5 L481.1,541.0 L483.1,548.9 L485.1,563.4 L487.1,579.5 L489.1,587.1 L491.1,596.1 L493.2,598.3 L495.2,576.8 L497.2,548.1 L499.2,537.9 L501.2,538.3 L503.2,538.3 L505.2,543.4 L507.2,549.3 L509.2,572.4 L511.3,585.1 L513.3,592.7 L515.3,593.0 L517.3,592.2 L519.3,569.1 L521.3,547.0 L523.3,538.3 L525.3,536.4 L527.3,539.4 L529.4,543.4 L531.4,548.0 L533.4,566.2 L535.4,578.4 L537.4,592.7 L539.4,591.7 L541.4,586.5 L543.4,565.2 L545.4,545.7 L547.5,538.1 L549.5,533.2 L551.5,536.5 L553.5,538.8 L555.5,546.5 L557.5,562.4 L559.5,580.4 L561.5,585.5 L563.5,592.3 L565.6,598.0 L567.6,563.1 L569.6,542.4 L571.6,528.9 L573.6,534.3 L575.6,534.3 L577.6,540.3 L579.6,547.6 L581.6,561.1 L583.7,583.8 L585.7,590.1 L587.7,591.0 L589.7,587.1 L591.7,563.3 L593.7,545.4 L595.7,534.2 L597.7,539.8 L599.7,542.0 L601.8,545.6 L603.8,549.9 L605.8,565.7 L607.8,578.1 L609.8,581.1 L611.8,586.7 L613.8,587.7 L615.8,573.8 L617.8,555.4 L619.9,537.6 L621.9,532.9 L623.9,534.2 L625.9,537.8 L627.9,540.7 L629.9,546.7 L631.9,568.6 L633.9,588.4 L635.9,592.0 L638.0,591.8 L640.0,564.0 L642.0,543.8 L644.0,532.3 L646.0,537.1 L648.0,538.7 L650.0,538.4 L652.0,541.7 L654.0,557.7 L656.1,576.1 L658.1,587.5 L660.1,589.3 L662.1,581.3 L664.1,565.2 L666.1,543.7 L668.1,533.3 L670.1,535.3 L672.1,540.3 L674.2,542.3 L676.2,548.2 L678.2,575.3 L680.2,587.6 L682.2,586.7 L684.2,589.6 L686.2,584.1 L688.2,564.5 L690.2,543.5 L692.3,531.4 L694.3,530.3 L696.3,533.2 L698.3,541.1 L700.3,543.6 L702.3,570.4 L704.3,591.2 L706.3,588.2 L708.3,589.3 L710.4,584.4 L712.4,567.3 L714.4,546.7 L716.4,533.0 L718.4,529.4 L720.4,535.6 L722.4,537.0 L724.4,542.1 L726.4,559.0 L728.5,584.0 L730.5,581.8 L732.5,582.3 L734.5,583.6 L736.5,562.4 L738.5,540.8 L740.5,526.8 L742.5,535.9 L744.5,537.3 L746.6,546.6 L748.6,549.6 L750.6,563.2 L752.6,577.0 L754.6,587.9 L756.6,592.5 L758.6,597.1 L760.6,575.5 L762.6,549.0 L764.7,536.1 L766.7,537.3 L768.7,544.9 L770.7,547.7 L772.7,553.1 L774.7,574.7 L776.7,596.2 L778.7,592.6 L780.7,589.2 L782.8,587.3 L784.8,567.1 L786.8,549.8 L788.8,542.3 L790.8,534.8 L792.8,535.1 L794.8,536.5 L796.8,543.3 L798.8,565.0 L800.9,580.9 L802.9,596.5 L804.9,600.3 L806.9,592.6 L808.9,563.1 L810.9,542.2 L812.9,529.3 L814.9,532.3 L816.9,536.0 L819.0,543.2 L821.0,544.9 L823.0,564.9 L825.0,576.6 L827.0,576.9" fill="none" stroke="#3366cc" stroke-width="2" stroke-linejoin="round"/><path d="M103.0,592.5 L105.0,587.5 L107.0,582.9 L109.0,556.8 L111.0,537.1 L113.1,522.8 L115.1,520.0 L117.1,525.6 L119.1,531.4 L121.1,534.7 L123.1,551.7 L125.1,562.2 L127.1,580.8 L129.1,589.1 L131.2,582.1 L133.2,558.1 L135.2,533.7 L137.2,521.8 L139.2,521.8 L141.2,523.3 L143.2,529.4 L145.2,532.6 L147.2,553.3 L149.3,572.3 L151.3,574.7 L153.3,585.3 L155.3,579.7 L157.3,555.9 L159.3,533.7 L161.3,522.1 L163.3,518.3 L165.3,522.2 L167.4,527.6 L169.4,531.5 L171.4,552.5 L173.4,572.3 L175.4,583.8 L177.4,584.6 L179.4,581.6 L181.4,552.0 L183.4,528.4 L185.5,511.9 L187.5,512.2 L189.5,515.3 L191.5,521.4 L193.5,528.7 L195.5,551.1 L197.5,572.1 L199.5,588.5 L201.5,592.8 L203.6,585.5 L205.6,552.3 L207.6,529.5 L209.6,516.0 L211.6,514.6 L213.6,521.1 L215.6,526.4 L217.6,533.6 L219.6,552.7 L221.7,576.8 L223.7,590.7 L225.7,591.3 L227.7,582.2 L229.7,555.2 L231.7,529.2 L233.7,514.2 L235.7,517.4 L237.7,520.8 L239.8,527.8 L241.8,531.3 L243.8,548.3 L245.8,565.8 L247.8,579.3 L249.8,578.3 L251.8,573.0 L253.8,551.3 L255.8,527.4 L257.9,518.4 L259.9,518.4 L261.9,519.1 L263.9,524.1 L265.9,529.5 L267.9,549.4 L269.9,558.6 L271.9,563.8 L273.9,580.5 L276.0,573.6 L278.0,550.6 L280.0,527.8 L282.0,514.7 L284.0,512.5 L286.0,518.0 L288.0,526.5 L290.0,533.6 L292.0,551.1 L294.1,573.3 L296.1,586.2 L298.1,587.9 L300.1,584.2 L302.1,548.2 L304.1,523.6 L306.1,511.0 L308.1,515.0 L310.1,522.1 L312.2,529.9 L314.2,536.3 L316.2,554.3 L318.2,590.7 L320.2,587.8 L322.2,585.8 L324.2,581.2 L326.2,559.0 L328.2,535.4 L330.3,520.0 L332.3,519.6 L334.3,523.8 L336.3,530.4 L338.3,535.8 L340.3,554.4 L342.3,573.4 L344.3,578.8 L346.3,577.5 L348.4,571.5 L350.4,552.7 L352.4,533.6 L354.4,521.9 L356.4,524.3 L358.4,526.9 L360.4,527.8 L362.4,534.7 L364.4,554.4 L366.5,569.8 L368.5,583.4 L370.5,581.3 L372.5,573.1 L374.5,549.9 L376.5,526.6 L378.5,520.0 L380.5,516.4 L382.5,518.8 L384.6,525.4 L386.6,529.4 L388.6,555.9 L390.6,580.1 L392.6,592.3 L394.6,590.7 L396.6,583.9 L398.6,556.4 L400.6,527.3 L402.7,512.0 L404.7,525.5 L406.7,529.2 L408.7,532.6 L410.7,535.4 L412.7,543.1 L414.7,561.4 L416.7,577.6 L418.7,583.9 L420.8,580.6 L422.8,556.5 L424.8,536.3 L426.8,524.4 L428.8,514.1 L430.8,518.3 L432.8,521.2 L434.8,525.8 L436.8,549.8 L438.9,574.1 L440.9,588.0 L442.9,590.8 L444.9,580.8 L446.9,532.8 L448.9,520.5 L450.9,514.9 L452.9,519.4 L454.9,522.8 L457.0,529.2 L459.0,546.8 L461.0,578.4 L463.0,580.5 L465.0,582.1 L467.0,586.4 L469.0,582.8 L471.0,560.1 L473.0,534.8 L475.1,520.5 L477.1,524.0 L479.1,527.9 L481.1,535.4 L483.1,538.4 L485.1,554.8 L487.1,571.9 L489.1,580.8 L491.1,586.2 L493.2,593.9 L495.2,568.0 L497.2,538.3 L499.2,524.0 L501.2,512.9 L503.2,517.5 L505.2,520.3 L507.2,529.2 L509.2,561.1 L511.3,576.4 L513.3,583.7 L515.3,584.6 L517.3,583.0 L519.3,554.2 L521.3,529.5 L523.3,513.9 L525.3,513.9 L527.3,519.1 L529.4,523.5 L531.4,528.6 L533.4,550.5 L535.4,572.1 L537.4,581.5 L539.4,587.4 L541.4,581.2 L543.4,549.7 L545.4,522.9 L547.5,512.7 L549.5,522.2 L551.5,523.8 L553.5,527.2 L555.5,534.7 L557.5,554.2 L559.5,570.7 L561.5,580.7 L563.5,585.8 L565.6,593.3 L567.6,555.9 L569.6,528.7 L571.6,514.0 L573.6,520.1 L575.6,524.7 L577.6,530.2 L579.6,539.6 L581.6,559.1 L583.7,574.9 L585.7,581.7 L587.7,585.3 L589.7,578.3 L591.7,553.7 L593.7,530.4 L595.7,521.4 L597.7,519.1 L599.7,522.8 L601.8,526.1 L603.8,532.4 L605.8,554.7 L607.8,567.0 L609.8,570.8 L611.8,576.1 L613.8,578.1 L615.8,557.6 L617.8,530.0 L619.9,512.0 L621.9,515.3 L623.9,518.6 L625.9,523.7 L627.9,523.1 L629.9,534.3 L631.9,560.6 L633.9,576.7 L635.9,582.0 L638.0,580.5 L640.0,556.3 L642.0,525.8 L644.0,513.7 L646.0,529.9 L648.0,523.7 L650.0,527.3 L652.0,530.1 L654.0,547.7 L656.1,570.0 L658.1,579.4 L660.1,581.9 L662.1,574.2 L664.1,555.1 L666.1,529.6 L668.1,518.5 L670.1,519.9 L672.1,520.2 L674.2,526.6 L676.2,534.7 L678.2,568.4 L680.2,577.3 L682.2,579.0 L684.2,581.8 L686.2,577.4 L688.2,551.3 L690.2,526.1 L692.3,514.7 L694.3,509.5 L696.3,516.8 L698.3,522.9 L700.3,531.9 L702.3,555.8 L704.3,580.4 L706.3,575.9 L708.3,578.1 L710.4,579.3 L712.4,554.4 L714.4,532.6 L716.4,518.9 L718.4,520.4 L720.4,518.7 L722.4,526.8 L724.4,534.1 L726.4,554.1 L728.5,568.5 L730.5,573.4 L732.5,574.2 L734.5,575.0 L736.5,556.0 L738.5,532.2 L740.5,516.6 L742.5,513.6 L744.5,523.6 L746.6,529.4 L748.6,537.4 L750.6,554.0 L752.6,572.4 L754.6,580.4 L756.6,589.2 L758.6,592.1 L760.6,563.7 L762.6,529.6 L764.7,518.3 L766.7,521.5 L768.7,525.5 L770.7,530.5 L772.7,535.1 L774.7,564.1 L776.7,593.0 L778.7,583.8 L780.7,582.4 L782.8,578.9 L784.8,557.7 L786.8,533.2 L788.8,522.7 L790.8,520.5 L792.8,523.3 L794.8,528.1 L796.8,533.1 L798.8,554.8 L800.9,572.0 L802.9,590.3 L804.9,596.4 L806.9,585.1 L808.9,557.4 L810.9,529.6 L812.9,517.2 L814.9,518.1 L816.9,522.8 L819.0,528.9 L821.0,538.8 L823.0,558.7 L825.0,566.7 L827.0,569.3" fill="none" stroke="#dd4477" stroke-width="2" stroke-linejoin="round"/><path d="M103.0,553.1 L105.0,552.4 L107.0,551.8 L109.0,551.3 L111.0,550.9 L113.1,550.6 L115.1,550.3 L117.1,550.0 L119.1,549.8 L121.1,549.6 L123.1,549.4 L125.1,549.3 L127.1,549.2 L129.1,549.1 L131.2,549.0 L133.2,549.0 L135.2,548.9 L137.2,548.9 L139.2,548.8 L141.2,548.8 L143.2,548.8 L145.2,548.7 L147.2,548.7 L149.3,548.7 L151.3,548.7 L153.3,548.7 L155.3,548.7 L157.3,548.6 L159.3,548.6 L161.3,548.6 L163.3,548.6 L165.3,548.6 L167.4,548.6 L169.4,548.6 L171.4,548.6 L173.4,548.6 L175.4,548.6 L177.4,548.6 L179.4,548.6 L181.4,548.6 L183.4,548.6 L185.5,548.6 L187.5,548.6 L189.5,548.6 L191.5,548.6 L193.5,548.6 L195.5,548.6 L197.5,548.6 L199.5,548.6 L201.5,548.6 L203.6,548.6 L205.6,548.6 L207.6,548.6 L209.6,548.6 L211.6,548.6 L213.6,548.6 L215.6,548.6 L217.6,548.6 L219.6,548.6 L221.7,548.6 L223.7,548.6 L225.7,548.6 L227.7,548.6 L229.7,548.6 L231.7,548.6 L233.7,548.6 L235.7,548.6 L237.7,548.6 L239.8,548.6 L241.8,548.6 L243.8,548.6 L245.8,548.6 L247.8,548.6 L249.8,548.6 L251.8,548.6 L253.8,548.6 L255.8,548.6 L257.9,548.6 L259.9,548.6 L261.9,548.6 L263.9,548.6 L265.9,548.6 L267.9,548.6 L269.9,548.6 L271.9,548.6 L273.9,548.6 L276.0,548.6 L278.0,548.6 L280.0,548.6 L282.0,548.6 L284.0,548.6 L286.0,548.6 L288.0,548.6 L290.0,548.6 L292.0,548.6 L294.1,548.6 L296.1,548.6 L298.1,548.6 L300.1,548.6 L302.1,548.6 L304.1,548.6 L306.1,548.6 L308.1,548.6 L310.1,548.6 L312.2,548.6 L314.2,548.6 L316.2,548.6 L318.2,548.6 L320.2,548.6 L322.2,548.6 L324.2,548.6 L326.2,548.6 L328.2,548.6 L330.3,548.6 L332.3,548.6 L334.3,548.6 L336.3,548.6 L338.3,548.6 L340.3,548.6 L342.3,548.6 L344.3,548.6 L346.3,548.6 L348.4,548.6 L350.4,548.6 L352.4,548.6 L354.4,548.6 L356.4,548.6 L358.4,548.6 L360.4,548.6 L362.4,548.6 L364.4,548.6 L366.5,548.6 L368.5,548.6 L370.5,548.6 L372.5,548.6 L374.5,548.6 L376.5,548.6 L378.5,548.6 L380.5,548.6 L382.5,548.6 L384.6,548.6 L386.6,548.6 L388.6,548.6 L390.6,548.6 L392.6,548.6 L394.6,548.6 L396.6,548.6 L398.6,548.6 L400.6,548.6 L402.7,548.6 L404.7,548.6 L406.7,548.6 L408.7,548.6 L410.7,548.6 L412.7,548.6 L414.7,548.6 L416.7,548.6 L418.7,548.6 L420.8,548.6 L422.8,548.6 L424.8,548.6 L426.8,548.6 L428.8,548.6 L430.8,548.6 L432.8,548.6 L434.8,548.6 L436.8,548.6 L438.9,548.6 L440.9,548.6 L442.9,548.6 L444.9,548.6 L446.9,548.6 L448.9,548.6 L450.9,548.6 L452.9,548.6 L454.9,548.6 L457.0,548.6 L459.0,548.6 L461.0,548.6 L463.0,548.6 L465.0,548.6 L467.0,548.6 L469.0,548.6 L471.0,548.6 L473.0,548.6 L475.1,548.6 L477.1,548.6 L479.1,548.6 L481.1,548.6 L483.1,548.6 L485.1,548.6 L487.1,548.6 L489.1,548.6 L491.1,548.6 L493.2,548.6 L495.2,548.6 L497.2,548.6 L499.2,548.6 L501.2,548.6 L503.2,548.6 L505.2,548.6 L507.2,548.6 L509.2,548.6 L511.3,548.6 L513.3,548.6 L515.3,548.6 L517.3,548.6 L519.3,548.6 L521.3,548.6 L523.3,548.6 L525.3,548.6 L527.3,548.6 L529.4,548.6 L531.4,548.6 L533.4,548.6 L535.4,548.6 L537.4,548.6 L539.4,548.6 L541.4,548.6 L543.4,548.6 L545.4,548.6 L547.5,548.6 L549.5,548.6 L551.5,548.6 L553.5,548.6 L555.5,548.6 L557.5,548.6 L559.5,548.6 L561.5,548.6 L563.5,548.6 L565.6,548.6 L567.6,548.6 L569.6,548.6 L571.6,548.6 L573.6,548.6 L575.6,548.6 L577.6,548.6 L579.6,548.6 L581.6,548.6 L583.7,548.6 L585.7,548.6 L587.7,548.6 L589.7,548.6 L591.7,548.6 L593.7,548.6 L595.7,548.6 L597.7,548.6 L599.7,548.6 L601.8,548.6 L603.8,548.6 L605.8,548.6 L607.8,548.6 L609.8,548.6 L611.8,548.6 L613.8,548.6 L615.8,548.6 L617.8,548.6 L619.9,548.6 L621.9,548.6 L623.9,548.6 L625.9,548.6 L627.9,548.6 L629.9,548.6 L631.9,548.6 L633.9,548.6 L635.9,548.6 L638.0,548.6 L640.0,548.6 L642.0,548.6 L644.0,548.6 L646.0,548.6 L648.0,548.6 L650.0,548.6 L652.0,548.6 L654.0,548.6 L656.1,548.6 L658.1,548.6 L660.1,548.6 L662.1,548.6 L664.1,548.6 L666.1,548.6 L668.1,548.6 L670.1,548.6 L672.1,548.6 L674.2,548.6 L676.2,548.6 L678.2,548.6 L680.2,548.6 L682.2,548.6 L684.2,548.6 L686.2,548.6 L688.2,548.6 L690.2,548.6 L692.3,548.6 L694.3,548.6 L696.3,548.6 L698.3,548.6 L700.3,548.6 L702.3,548.6 L704.3,548.6 L706.3,548.6 L708.3,548.6 L710.4,548.6 L712.4,548.6 L714.4,548.6 L716.4,548.6 L718.4,548.6 L720.4,548.6 L722.4,548.6 L724.4,548.6 L726.4,548.6 L728.5,548.6 L730.5,548.6 L732.5,548.6 L734.5,548.6 L736.5,548.6 L738.5,548.6 L740.5,548.6 L742.5,548.6 L744.5,548.6 L746.6,548.6 L748.6,548.6 L750.6,548.6 L752.6,548.6 L754.6,548.6 L756.6,548.6 L758.6,548.6 L760.6,548.6 L762.6,548.6 L764.7,548.6 L766.7,548.6 L768.7,548.6 L770.7,548.6 L772.7,548.6 L774.7,548.6 L776.7,548.6 L778.7,548.6 L780.7,548.6 L782.8,548.6 L784.8,548.6 L786.8,548.6 L788.8,548.6 L790.8,548.6 L792.8,548.6 L794.8,548.6 L796.8,548.6 L798.8,548.6 L800.9,548.6 L802.9,548.6 L804.9,548.6 L806.9,548.6 L808.9,548.6 L810.9,548.6 L812.9,548.6 L814.9,548.6 L816.9,548.6 L819.0,548.6 L821.0,548.6 L823.0,548.6 L825.0,548.6 L827.0,548.6" fill="none" stroke="#994499" stroke-width="2" stroke-linejoin="round"/></g>
<clipPath id="cp"><rect x="100" y="430" width="740" height="250"/></clipPath>
<text x="24.7" y="16.5" font-size="10.8" fill="#f2f200" font-weight="bold" font-style="normal" text-anchor="start" textLength="29.1" lengthAdjust="spacingAndGlyphs">Home</text><text x="88.6" y="16.5" font-size="10.8" fill="#f2f200" font-weight="bold" font-style="normal" text-anchor="start" textLength="56.2" lengthAdjust="spacingAndGlyphs">Instructions</text><text x="179.7" y="16.5" font-size="10.8" fill="#f2f200" font-weight="bold" font-style="normal" text-anchor="start" textLength="38.0" lengthAdjust="spacingAndGlyphs">Projects</text><text x="252.0" y="16.5" font-size="10.8" fill="#f2f200" font-weight="bold" font-style="normal" text-anchor="start" textLength="26.0" lengthAdjust="spacingAndGlyphs">Input</text><text x="402.0" y="16.5" font-size="10.8" fill="#f2f200" font-weight="bold" font-style="normal" text-anchor="start" textLength="25.0" lengthAdjust="spacingAndGlyphs">Tools</text><text x="462.0" y="16.5" font-size="10.8" fill="#f2f200" font-weight="bold" font-style="normal" text-anchor="start" textLength="93.8" lengthAdjust="spacingAndGlyphs">Interpreting Results</text><text x="590.0" y="16.5" font-size="10.8" fill="#f2f200" font-weight="bold" font-style="normal" text-anchor="start" textLength="5.5" lengthAdjust="spacingAndGlyphs">?</text><text x="630.0" y="16.5" font-size="10.8" fill="#f2f200" font-weight="bold" font-style="normal" text-anchor="start" textLength="30.0" lengthAdjust="spacingAndGlyphs">About</text><text x="312.5" y="16.2" font-size="10.8" fill="#f2f200" font-weight="bold" font-style="italic" text-anchor="start" textLength="55.0" lengthAdjust="spacingAndGlyphs">ME Design</text><rect x="312" y="17" width="55.5" height="1.2" fill="#e6e600"/><text x="704.4" y="17.0" font-size="10.5" fill="#000" font-weight="bold" font-style="normal" text-anchor="start" textLength="13.6" lengthAdjust="spacingAndGlyphs">US</text><text x="737.4" y="17.0" font-size="10.5" fill="#000" font-weight="bold" font-style="normal" text-anchor="start" textLength="8.6" lengthAdjust="spacingAndGlyphs">SI</text><text x="784.0" y="17.2" font-size="13" fill="#000" font-weight="bold" font-style="normal" text-anchor="start" textLength="68.0" lengthAdjust="spacingAndGlyphs">Save To DB</text><text x="869.0" y="17.2" font-size="13" fill="#000" font-weight="bold" font-style="normal" text-anchor="start" textLength="69.0" lengthAdjust="spacingAndGlyphs">Save To File</text><text x="22.0" y="44.9" font-size="11" fill="#ff2828" font-weight="bold" font-style="italic" text-anchor="start" textLength="72.0" lengthAdjust="spacingAndGlyphs">Loaded Project:</text><text x="108.2" y="45.6" font-size="11" fill="#444" font-weight="normal" font-style="normal" text-anchor="start" textLength="137.6" lengthAdjust="spacingAndGlyphs" stroke="#444" stroke-width="0.2">I-5 Pocket to Florin Redesign</text><text x="456.7" y="44.9" font-size="11" fill="#ff2828" font-weight="bold" font-style="italic" text-anchor="start" textLength="60.0" lengthAdjust="spacingAndGlyphs">Loaded Trial:</text><text x="532.7" y="45.6" font-size="11" fill="#444" font-weight="normal" font-style="normal" text-anchor="start" textLength="169.3" lengthAdjust="spacingAndGlyphs" stroke="#444" stroke-width="0.2">NBL1-493_538: FDR-FA and Overlay</text><text x="913.8" y="44.3" font-size="11" fill="#fff" font-weight="bold" font-style="normal" text-anchor="start" textLength="6.5" lengthAdjust="spacingAndGlyphs" stroke="#fff" stroke-width="0.4">?</text><text x="29.3" y="74.4" font-size="14" fill="#111" font-weight="normal" font-style="normal" text-anchor="start" textLength="93.3" lengthAdjust="spacingAndGlyphs">Run Simulation</text><text x="158.3" y="75.8" font-size="13" fill="#111" font-weight="normal" font-style="normal" text-anchor="start" textLength="49.6" lengthAdjust="spacingAndGlyphs" stroke="#111" stroke-width="0.35">Progress</text><text x="210.3" y="75.8" font-size="13" fill="#111" font-weight="normal" font-style="normal" text-anchor="start" textLength="36.6" lengthAdjust="spacingAndGlyphs" stroke="#111" stroke-width="0.35">(secs):</text><text x="249.8" y="75.8" font-size="13" fill="#111" font-weight="normal" font-style="normal" text-anchor="start" textLength="17.5" lengthAdjust="spacingAndGlyphs" stroke="#111" stroke-width="0.35">101</text><text x="270.4" y="75.8" font-size="13" fill="#111" font-weight="normal" font-style="normal" text-anchor="start" textLength="19.9" lengthAdjust="spacingAndGlyphs" stroke="#111" stroke-width="0.35">102</text><text x="293.0" y="75.8" font-size="13" fill="#111" font-weight="normal" font-style="normal" text-anchor="start" textLength="19.6" lengthAdjust="spacingAndGlyphs" stroke="#111" stroke-width="0.35">103</text><text x="316.1" y="75.8" font-size="13" fill="#111" font-weight="normal" font-style="normal" text-anchor="start" textLength="19.5" lengthAdjust="spacingAndGlyphs" stroke="#111" stroke-width="0.35">104</text><text x="338.6" y="75.8" font-size="13" fill="#111" font-weight="normal" font-style="normal" text-anchor="start" textLength="19.7" lengthAdjust="spacingAndGlyphs" stroke="#111" stroke-width="0.35">105</text><text x="361.7" y="75.8" font-size="13" fill="#111" font-weight="normal" font-style="normal" text-anchor="start" textLength="19.2" lengthAdjust="spacingAndGlyphs" stroke="#111" stroke-width="0.35">106</text><text x="384.7" y="75.8" font-size="13" fill="#111" font-weight="normal" font-style="normal" text-anchor="start" textLength="19.4" lengthAdjust="spacingAndGlyphs" stroke="#111" stroke-width="0.35">107</text><text x="407.4" y="75.8" font-size="13" fill="#111" font-weight="normal" font-style="normal" text-anchor="start" textLength="19.4" lengthAdjust="spacingAndGlyphs" stroke="#111" stroke-width="0.35">108</text><text x="430.1" y="75.8" font-size="13" fill="#111" font-weight="normal" font-style="normal" text-anchor="start" textLength="18.5" lengthAdjust="spacingAndGlyphs" stroke="#111" stroke-width="0.35">109</text><text x="451.9" y="75.8" font-size="13" fill="#111" font-weight="normal" font-style="normal" text-anchor="start" textLength="18.2" lengthAdjust="spacingAndGlyphs" stroke="#111" stroke-width="0.35">110</text><text x="473.3" y="75.8" font-size="13" fill="#111" font-weight="normal" font-style="normal" text-anchor="start" textLength="14.8" lengthAdjust="spacingAndGlyphs" stroke="#111" stroke-width="0.35">111</text><text x="491.4" y="75.8" font-size="13" fill="#111" font-weight="normal" font-style="normal" text-anchor="start" textLength="18.2" lengthAdjust="spacingAndGlyphs" stroke="#111" stroke-width="0.35">112</text><text x="512.7" y="75.8" font-size="13" fill="#111" font-weight="normal" font-style="normal" text-anchor="start" textLength="17.9" lengthAdjust="spacingAndGlyphs" stroke="#111" stroke-width="0.35">113</text><text x="533.5" y="75.8" font-size="13" fill="#111" font-weight="normal" font-style="normal" text-anchor="start" textLength="17.6" lengthAdjust="spacingAndGlyphs" stroke="#111" stroke-width="0.35">114</text><text x="554.1" y="75.8" font-size="13" fill="#111" font-weight="normal" font-style="normal" text-anchor="start" textLength="18.0" lengthAdjust="spacingAndGlyphs" stroke="#111" stroke-width="0.35">115</text><text x="575.4" y="75.8" font-size="13" fill="#111" font-weight="normal" font-style="normal" text-anchor="start" textLength="18.2" lengthAdjust="spacingAndGlyphs" stroke="#111" stroke-width="0.35">116</text><text x="596.6" y="75.8" font-size="13" fill="#111" font-weight="normal" font-style="normal" text-anchor="start" textLength="16.0" lengthAdjust="spacingAndGlyphs" stroke="#111" stroke-width="0.35">117</text><text x="616.6" y="75.8" font-size="13" fill="#111" font-weight="normal" font-style="normal" text-anchor="start" textLength="17.6" lengthAdjust="spacingAndGlyphs" stroke="#111" stroke-width="0.35">118</text><text x="637.6" y="75.8" font-size="13" fill="#111" font-weight="normal" font-style="normal" text-anchor="start" textLength="17.6" lengthAdjust="spacingAndGlyphs" stroke="#111" stroke-width="0.35">119</text><text x="658.1" y="75.8" font-size="13" fill="#111" font-weight="normal" font-style="normal" text-anchor="start" textLength="21.7" lengthAdjust="spacingAndGlyphs" stroke="#111" stroke-width="0.35">Sim</text><text x="683.1" y="75.8" font-size="13" fill="#111" font-weight="normal" font-style="normal" text-anchor="start" textLength="40.8" lengthAdjust="spacingAndGlyphs" stroke="#111" stroke-width="0.35">Done...</text><text x="726.8" y="75.8" font-size="13" fill="#111" font-weight="normal" font-style="normal" text-anchor="start" textLength="19.7" lengthAdjust="spacingAndGlyphs" stroke="#111" stroke-width="0.35">120</text><text x="749.4" y="75.8" font-size="13" fill="#111" font-weight="normal" font-style="normal" text-anchor="start" textLength="27.9" lengthAdjust="spacingAndGlyphs" stroke="#111" stroke-width="0.35">Rpts</text><text x="780.2" y="75.8" font-size="13" fill="#111" font-weight="normal" font-style="normal" text-anchor="start" textLength="29.9" lengthAdjust="spacingAndGlyphs" stroke="#111" stroke-width="0.35">Done</text><text x="147.4" y="99.9" font-size="12" fill="#222" font-weight="bold" font-style="italic" text-anchor="start" textLength="63.2" lengthAdjust="spacingAndGlyphs">Monte Carlo</text><text x="231.1" y="99.9" font-size="12" fill="#222" font-weight="bold" font-style="italic" text-anchor="start" textLength="77.0" lengthAdjust="spacingAndGlyphs">60 Simulations</text><text x="328.6" y="99.9" font-size="12" fill="#222" font-weight="bold" font-style="italic" text-anchor="start" textLength="52.5" lengthAdjust="spacingAndGlyphs">DL=20 yrs</text><text x="402.1" y="99.9" font-size="12" fill="#222" font-weight="bold" font-style="italic" text-anchor="start" textLength="36.5" lengthAdjust="spacingAndGlyphs">TI=12.5</text><text x="464.8" y="99.4" font-size="11.5" fill="#222" font-weight="bold" font-style="normal" text-anchor="start" textLength="105.0" lengthAdjust="spacingAndGlyphs">Simulation Duration</text><text x="598.6" y="99.4" font-size="11.5" fill="#222" font-weight="normal" font-style="normal" text-anchor="start" textLength="10.7" lengthAdjust="spacingAndGlyphs" stroke="#222" stroke-width="0.3">30</text><text x="620.7" y="99.4" font-size="11.5" fill="#222" font-weight="bold" font-style="normal" text-anchor="start" textLength="15.2" lengthAdjust="spacingAndGlyphs">yrs</text><text x="696.4" y="99.6" font-size="11.5" fill="#222" font-weight="bold" font-style="normal" text-anchor="start" textLength="166.0" lengthAdjust="spacingAndGlyphs">Graph Modulus using Log Scale</text><text x="143.3" y="120.0" font-size="11" fill="#222" font-weight="normal" font-style="normal" text-anchor="start" textLength="230.0" lengthAdjust="spacingAndGlyphs" stroke="#222" stroke-width="0.3">Overall reliability is greater than required (95%).</text><text x="54.3" y="122.8" font-size="14" fill="#111" font-weight="normal" font-style="normal" text-anchor="start" textLength="43.6" lengthAdjust="spacingAndGlyphs">Cancel</text><text x="715.4" y="126.2" font-size="13.5" fill="#111" font-weight="normal" font-style="normal" text-anchor="start" textLength="44.3" lengthAdjust="spacingAndGlyphs">Graphs</text><text x="785.4" y="126.2" font-size="13.5" fill="#111" font-weight="normal" font-style="normal" text-anchor="start" textLength="47.0" lengthAdjust="spacingAndGlyphs">Reports</text><text x="90.3" y="349.5" font-size="12" fill="#444" font-weight="normal" font-style="normal" text-anchor="end" textLength="6.4" lengthAdjust="spacingAndGlyphs">1</text><text x="90.3" y="307.5" font-size="12" fill="#444" font-weight="normal" font-style="normal" text-anchor="end" textLength="6.4" lengthAdjust="spacingAndGlyphs">2</text><text x="90.3" y="265.5" font-size="12" fill="#444" font-weight="normal" font-style="normal" text-anchor="end" textLength="6.4" lengthAdjust="spacingAndGlyphs">3</text><text x="90.3" y="223.5" font-size="12" fill="#444" font-weight="normal" font-style="normal" text-anchor="end" textLength="6.4" lengthAdjust="spacingAndGlyphs">4</text><text x="90.3" y="181.5" font-size="12" fill="#444" font-weight="normal" font-style="normal" text-anchor="end" textLength="6.4" lengthAdjust="spacingAndGlyphs">5</text><text x="90.3" y="391.0" font-size="12" fill="#444" font-weight="normal" font-style="normal" text-anchor="end" textLength="6.4" lengthAdjust="spacingAndGlyphs">0</text><text x="137.5" y="400.3" font-size="8" fill="#444" font-weight="normal" font-style="normal" text-anchor="middle" textLength="18.0" lengthAdjust="spacingAndGlyphs">2024</text><text x="185.5" y="400.3" font-size="8" fill="#444" font-weight="normal" font-style="normal" text-anchor="middle" textLength="18.0" lengthAdjust="spacingAndGlyphs">2026</text><text x="234.5" y="400.3" font-size="8" fill="#444" font-weight="normal" font-style="normal" text-anchor="middle" textLength="18.0" lengthAdjust="spacingAndGlyphs">2028</text><text x="282.5" y="400.3" font-size="8" fill="#444" font-weight="normal" font-style="normal" text-anchor="middle" textLength="18.0" lengthAdjust="spacingAndGlyphs">2030</text><text x="330.5" y="400.3" font-size="8" fill="#444" font-weight="normal" font-style="normal" text-anchor="middle" textLength="18.0" lengthAdjust="spacingAndGlyphs">2032</text><text x="379.5" y="400.3" font-size="8" fill="#444" font-weight="normal" font-style="normal" text-anchor="middle" textLength="18.0" lengthAdjust="spacingAndGlyphs">2034</text><text x="427.5" y="400.3" font-size="8" fill="#444" font-weight="normal" font-style="normal" text-anchor="middle" textLength="18.0" lengthAdjust="spacingAndGlyphs">2036</text><text x="475.5" y="400.3" font-size="8" fill="#444" font-weight="normal" font-style="normal" text-anchor="middle" textLength="18.0" lengthAdjust="spacingAndGlyphs">2038</text><text x="524.5" y="400.3" font-size="8" fill="#444" font-weight="normal" font-style="normal" text-anchor="middle" textLength="18.0" lengthAdjust="spacingAndGlyphs">2040</text><text x="572.5" y="400.3" font-size="8" fill="#444" font-weight="normal" font-style="normal" text-anchor="middle" textLength="18.0" lengthAdjust="spacingAndGlyphs">2042</text><text x="620.5" y="400.3" font-size="8" fill="#444" font-weight="normal" font-style="normal" text-anchor="middle" textLength="18.0" lengthAdjust="spacingAndGlyphs">2044</text><text x="669.5" y="400.3" font-size="8" fill="#444" font-weight="normal" font-style="normal" text-anchor="middle" textLength="18.0" lengthAdjust="spacingAndGlyphs">2046</text><text x="717.5" y="400.3" font-size="8" fill="#444" font-weight="normal" font-style="normal" text-anchor="middle" textLength="18.0" lengthAdjust="spacingAndGlyphs">2048</text><text x="765.5" y="400.3" font-size="8" fill="#444" font-weight="normal" font-style="normal" text-anchor="middle" textLength="18.0" lengthAdjust="spacingAndGlyphs">2050</text><text x="814.5" y="400.3" font-size="8" fill="#444" font-weight="normal" font-style="normal" text-anchor="middle" textLength="18.0" lengthAdjust="spacingAndGlyphs">2052</text><text x="129.5" y="166.0" font-size="12" fill="#333" font-weight="normal" font-style="normal" text-anchor="start" textLength="36.1" lengthAdjust="spacingAndGlyphs">Overall</text><text x="212.5" y="166.0" font-size="12" fill="#333" font-weight="normal" font-style="normal" text-anchor="start" textLength="44.5" lengthAdjust="spacingAndGlyphs">Cracking</text><text x="303.9" y="166.0" font-size="12" fill="#333" font-weight="normal" font-style="normal" text-anchor="start" textLength="36.1" lengthAdjust="spacingAndGlyphs">Rutting</text><text x="386.8" y="166.0" font-size="12" fill="#333" font-weight="normal" font-style="normal" text-anchor="start" textLength="50.8" lengthAdjust="spacingAndGlyphs">Threshold</text><text x="453.8" y="415.6" font-size="11.5" fill="#222" font-weight="normal" font-style="italic" text-anchor="start" textLength="24.2" lengthAdjust="spacingAndGlyphs">Date</text><text x="0" y="0" font-size="11.5" fill="#222" transform="translate(55.5,282) rotate(-90)" text-anchor="middle" textLength="112.5" lengthAdjust="spacingAndGlyphs">Failure Probability (%)</text><text x="90.3" y="470.3" font-size="12" fill="#444" font-weight="normal" font-style="normal" text-anchor="end" textLength="35.2" lengthAdjust="spacingAndGlyphs">10,000</text><text x="90.3" y="490.3" font-size="12" fill="#444" font-weight="normal" font-style="normal" text-anchor="end" textLength="28.8" lengthAdjust="spacingAndGlyphs">5,000</text><text x="90.3" y="535.3" font-size="12" fill="#444" font-weight="normal" font-style="normal" text-anchor="end" textLength="28.8" lengthAdjust="spacingAndGlyphs">1,000</text><text x="90.3" y="555.3" font-size="12" fill="#444" font-weight="normal" font-style="normal" text-anchor="end" textLength="19.2" lengthAdjust="spacingAndGlyphs">500</text><text x="90.3" y="600.3" font-size="12" fill="#444" font-weight="normal" font-style="normal" text-anchor="end" textLength="19.2" lengthAdjust="spacingAndGlyphs">100</text><text x="90.3" y="619.3" font-size="12" fill="#444" font-weight="normal" font-style="normal" text-anchor="end" textLength="12.8" lengthAdjust="spacingAndGlyphs">50</text><text x="90.3" y="680.6" font-size="12" fill="#444" font-weight="normal" font-style="normal" text-anchor="end" textLength="6.4" lengthAdjust="spacingAndGlyphs">0</text><text x="137.5" y="690.9" font-size="11" fill="#444" font-weight="normal" font-style="normal" text-anchor="middle" textLength="25.0" lengthAdjust="spacingAndGlyphs">2024</text><text x="185.5" y="690.9" font-size="11" fill="#444" font-weight="normal" font-style="normal" text-anchor="middle" textLength="25.0" lengthAdjust="spacingAndGlyphs">2026</text><text x="234.5" y="690.9" font-size="11" fill="#444" font-weight="normal" font-style="normal" text-anchor="middle" textLength="25.0" lengthAdjust="spacingAndGlyphs">2028</text><text x="282.5" y="690.9" font-size="11" fill="#444" font-weight="normal" font-style="normal" text-anchor="middle" textLength="25.0" lengthAdjust="spacingAndGlyphs">2030</text><text x="330.5" y="690.9" font-size="11" fill="#444" font-weight="normal" font-style="normal" text-anchor="middle" textLength="25.0" lengthAdjust="spacingAndGlyphs">2032</text><text x="379.5" y="690.9" font-size="11" fill="#444" font-weight="normal" font-style="normal" text-anchor="middle" textLength="25.0" lengthAdjust="spacingAndGlyphs">2034</text><text x="427.5" y="690.9" font-size="11" fill="#444" font-weight="normal" font-style="normal" text-anchor="middle" textLength="25.0" lengthAdjust="spacingAndGlyphs">2036</text><text x="475.5" y="690.9" font-size="11" fill="#444" font-weight="normal" font-style="normal" text-anchor="middle" textLength="25.0" lengthAdjust="spacingAndGlyphs">2038</text><text x="524.5" y="690.9" font-size="11" fill="#444" font-weight="normal" font-style="normal" text-anchor="middle" textLength="25.0" lengthAdjust="spacingAndGlyphs">2040</text><text x="572.5" y="690.9" font-size="11" fill="#444" font-weight="normal" font-style="normal" text-anchor="middle" textLength="25.0" lengthAdjust="spacingAndGlyphs">2042</text><text x="620.5" y="690.9" font-size="11" fill="#444" font-weight="normal" font-style="normal" text-anchor="middle" textLength="25.0" lengthAdjust="spacingAndGlyphs">2044</text><text x="669.5" y="690.9" font-size="11" fill="#444" font-weight="normal" font-style="normal" text-anchor="middle" textLength="25.0" lengthAdjust="spacingAndGlyphs">2046</text><text x="717.5" y="690.9" font-size="11" fill="#444" font-weight="normal" font-style="normal" text-anchor="middle" textLength="25.0" lengthAdjust="spacingAndGlyphs">2048</text><text x="765.5" y="690.9" font-size="11" fill="#444" font-weight="normal" font-style="normal" text-anchor="middle" textLength="25.0" lengthAdjust="spacingAndGlyphs">2050</text><text x="814.5" y="690.9" font-size="11" fill="#444" font-weight="normal" font-style="normal" text-anchor="middle" textLength="25.0" lengthAdjust="spacingAndGlyphs">2052</text><text x="453.9" y="705.8" font-size="11" fill="#222" font-weight="normal" font-style="normal" text-anchor="start" textLength="23.3" lengthAdjust="spacingAndGlyphs">Date</text><text x="0" y="0" font-size="11.5" fill="#222" font-style="italic" transform="translate(40.5,571) rotate(-90)" text-anchor="middle" textLength="69.5" lengthAdjust="spacingAndGlyphs">Modulus (ksi)</text><text x="129.5" y="455.6" font-size="12" fill="#333" font-weight="normal" font-style="normal" text-anchor="start" textLength="36.4" lengthAdjust="spacingAndGlyphs">Min-E1</text><text x="212.5" y="455.6" font-size="12" fill="#333" font-weight="normal" font-style="normal" text-anchor="start" textLength="36.4" lengthAdjust="spacingAndGlyphs">Min-E2</text><text x="295.3" y="455.6" font-size="12" fill="#333" font-weight="normal" font-style="normal" text-anchor="start" textLength="36.4" lengthAdjust="spacingAndGlyphs">Min-E3</text><text x="377.8" y="455.6" font-size="12" fill="#333" font-weight="normal" font-style="normal" text-anchor="start" textLength="36.4" lengthAdjust="spacingAndGlyphs">Min-E4</text><text x="459.8" y="455.6" font-size="12" fill="#333" font-weight="normal" font-style="normal" text-anchor="start" textLength="36.4" lengthAdjust="spacingAndGlyphs">Min-E5</text><text x="543.1" y="455.6" font-size="12" fill="#333" font-weight="normal" font-style="normal" text-anchor="start" textLength="36.4" lengthAdjust="spacingAndGlyphs">Min-E6</text><text x="625.9" y="455.6" font-size="12" fill="#333" font-weight="normal" font-style="normal" text-anchor="start" textLength="39.6" lengthAdjust="spacingAndGlyphs">Max-E1</text><text x="711.3" y="455.6" font-size="12" fill="#333" font-weight="normal" font-style="normal" text-anchor="start" textLength="39.6" lengthAdjust="spacingAndGlyphs">Max-E2</text><text x="798.5" y="455.8" font-size="11.5" fill="#2222cc" font-weight="normal" font-style="normal" text-anchor="start" textLength="15.0" lengthAdjust="spacingAndGlyphs">1/2</text>
</svg>
</body></html>
